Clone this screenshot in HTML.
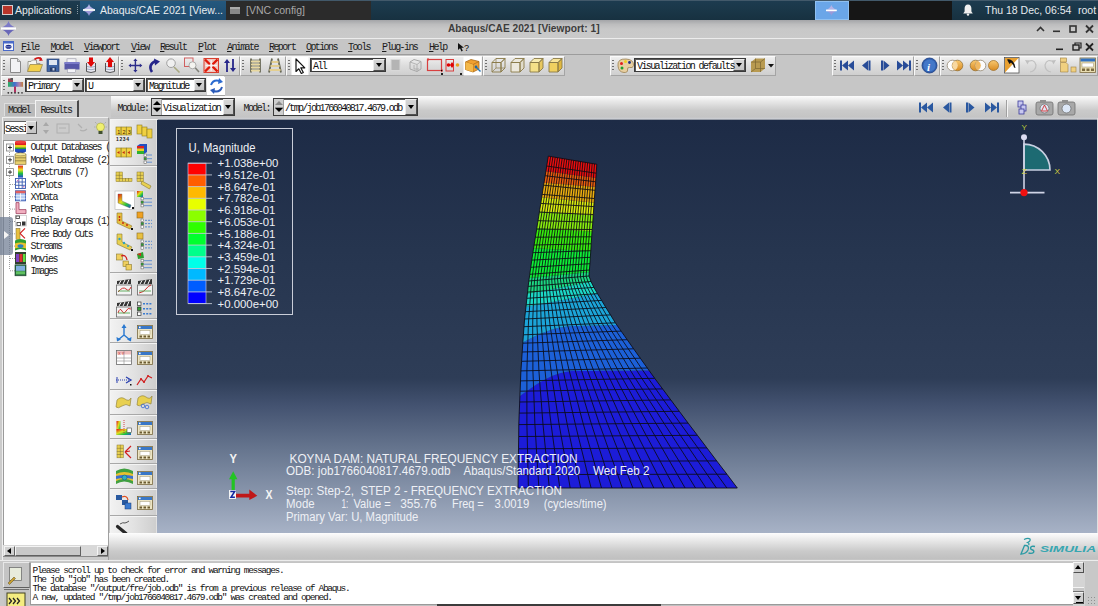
<!DOCTYPE html><html><head><meta charset="utf-8"><style>
*{margin:0;padding:0;box-sizing:border-box}
html,body{width:1098px;height:606px;overflow:hidden;background:#d4d4d4;font-family:'Liberation Sans',sans-serif}
div{position:absolute}
.t{white-space:pre;line-height:12px}
svg{position:absolute;overflow:visible}
.grp{background:linear-gradient(#f0f0f0,#dcdcdc 50%,#cfcfcf);border-top:1px solid #fafafa;border-left:1px solid #fafafa;border-right:1px solid #a4a4a4;border-bottom:1px solid #a4a4a4}
.grip{width:2px;background:repeating-linear-gradient(#707070 0 1px,transparent 1px 3px)}
.combo{background:#fff;border:1px solid #3a3a3a;box-shadow:inset 1px 1px 0 #5a5a5a}
.dbtn{background:linear-gradient(#d6d6d6,#c4c4c4);border-top:1px solid #ececec;border-left:1px solid #ececec;border-right:1px solid #505050;border-bottom:1px solid #505050}
.tri{width:0;height:0;border-left:3.5px solid transparent;border-right:3.5px solid transparent;border-top:4px solid #000}
</style></head><body><div style="left:0;top:0;width:1098px;height:20px;background:linear-gradient(#1d3c50,#173140)"></div><div style="left:0;top:0;width:1098px;height:1px;background:#42596a"></div><div style="left:2px;top:5px;width:11px;height:10px;background:#b8352a;border:1px solid #d8cccc"></div><div class="t" style="left:15px;top:3px;font:10.5px 'Liberation Sans',sans-serif;color:#e4e8ea;line-height:14px">Applications</div><div style="left:77px;top:5px;width:1px;height:10px;background:repeating-linear-gradient(#8a9aa4 0 1px,transparent 1px 2px)"></div><div style="left:80px;top:1px;width:146px;height:19px;background:linear-gradient(#24587e,#1e4b6e)"></div><svg style="left:83px;top:4px" width="12.0" height="12.0" viewBox="0 0 12 12"><path d="M6 0Q6.8 3.2 11.5 5.2H0.5Q5.2 3.2 6 0Z" fill="#b4b2e6"/><path d="M6 12Q6.8 8.8 11.5 6.8H0.5Q5.2 8.8 6 12Z" fill="#9a98d8"/><rect x="0" y="5.1" width="12" height="1.8" fill="#fff"/></svg><div class="t" style="left:100px;top:3px;font:10.5px 'Liberation Sans',sans-serif;color:#e8ecef;line-height:14px">Abaqus/CAE 2021 [View...</div><div style="left:226px;top:1px;width:145px;height:19px;background:#2b2b2b"></div><div style="left:230px;top:7px;width:10px;height:7px;background:#888;border-top:2px solid #aaa"></div><div class="t" style="left:246px;top:3px;font:10.5px 'Liberation Sans',sans-serif;color:#a8a8a8;line-height:14px">[VNC config]</div><div style="left:815px;top:1px;width:34px;height:19px;background:#6aa6e8;border:1px solid #8fc0f0"></div><svg style="left:826px;top:5px" width="10.8" height="10.8" viewBox="0 0 12 12"><path d="M6 0Q6.8 3.2 11.5 5.2H0.5Q5.2 3.2 6 0Z" fill="#b4b2e6"/><path d="M6 12Q6.8 8.8 11.5 6.8H0.5Q5.2 8.8 6 12Z" fill="#9a98d8"/><rect x="0" y="5.1" width="12" height="1.8" fill="#fff"/></svg><div style="left:849px;top:1px;width:103px;height:19px;background:#161616"></div><svg style="left:962px;top:4px" width="12" height="12" viewBox="0 0 12 12"><path d="M6 0.5C3.6 0.5 2.6 2.4 2.6 4.6V7.6L1.2 9.4H10.8L9.4 7.6V4.6C9.4 2.4 8.4 0.5 6 0.5Z" fill="#f0f0f0"/><circle cx="6" cy="10.6" r="1.2" fill="#f0f0f0"/></svg><div class="t" style="left:985px;top:3px;font:10.5px 'Liberation Sans',sans-serif;color:#e8ecef;line-height:14px">Thu 18 Dec, 06:54</div><div class="t" style="left:1078px;top:3px;font:10.5px 'Liberation Sans',sans-serif;color:#e8ecef;line-height:14px">root</div><div style="left:0;top:20px;width:1098px;height:18px;background:linear-gradient(#a4a5a8 0%,#bdbdbe 25%,#c8c8c8 50%,#cacaca 100%)"></div><svg style="left:0.5px;top:20.5px" width="15.0" height="15.0" viewBox="0 0 12 12"><path d="M6 0Q6.8 3.2 11.5 5.2H0.5Q5.2 3.2 6 0Z" fill="#7c7ac8"/><path d="M6 12Q6.8 8.8 11.5 6.8H0.5Q5.2 8.8 6 12Z" fill="#6a68b8"/><rect x="0" y="5.1" width="12" height="1.8" fill="#fff"/></svg><div class="t" style="left:448px;top:22px;font:bold 10.2px 'Liberation Sans',sans-serif;color:#3c3c3c;line-height:13px">Abaqus/CAE 2021 [Viewport: 1]</div><svg style="left:1034px;top:23px" width="64" height="12" viewBox="0 0 64 12"><path d="M3 8L6.5 4.5L10 8" stroke="#333" stroke-width="1.6" fill="none"/><rect x="19" y="7.5" width="7" height="1.6" fill="#333"/><rect x="36" y="3" width="6" height="6" stroke="#333" stroke-width="1.6" fill="none"/><path d="M52 2.5L59 9.5M59 2.5L52 9.5" stroke="#333" stroke-width="1.8"/></svg><div style="left:0;top:38px;width:1098px;height:17px;background:#c6c6c6;border-top:1px solid #ececec;border-bottom:1px solid #9c9c9c"></div><svg style="left:3px;top:41px" width="11" height="10" viewBox="0 0 11 10"><rect x="0.5" y="0.5" width="10" height="9" fill="#f4f6fc" stroke="#4a6ac8" stroke-width="1"/><rect x="0.5" y="0.5" width="10" height="2" fill="#4a6ac8"/><ellipse cx="5.5" cy="5.8" rx="3" ry="2" fill="#1a2a88"/><rect x="3" y="5.3" width="5" height="1" fill="#8090d0"/></svg><div class="t" style="left:21px;top:42px;font:10px 'Liberation Mono',monospace;letter-spacing:-1.6px;color:#1c1c1c;line-height:12px"><u style="text-underline-offset:1px;text-decoration-thickness:1px">F</u>ile</div><div class="t" style="left:50.5px;top:42px;font:10px 'Liberation Mono',monospace;letter-spacing:-1.6px;color:#1c1c1c;line-height:12px"><u style="text-underline-offset:1px;text-decoration-thickness:1px">M</u>odel</div><div class="t" style="left:84px;top:42px;font:10px 'Liberation Mono',monospace;letter-spacing:-1.6px;color:#1c1c1c;line-height:12px"><u style="text-underline-offset:1px;text-decoration-thickness:1px">V</u>iewport</div><div class="t" style="left:131px;top:42px;font:10px 'Liberation Mono',monospace;letter-spacing:-1.6px;color:#1c1c1c;line-height:12px"><u style="text-underline-offset:1px;text-decoration-thickness:1px">V</u>iew</div><div class="t" style="left:160px;top:42px;font:10px 'Liberation Mono',monospace;letter-spacing:-1.6px;color:#1c1c1c;line-height:12px"><u style="text-underline-offset:1px;text-decoration-thickness:1px">R</u>esult</div><div class="t" style="left:198px;top:42px;font:10px 'Liberation Mono',monospace;letter-spacing:-1.6px;color:#1c1c1c;line-height:12px"><u style="text-underline-offset:1px;text-decoration-thickness:1px">P</u>lot</div><div class="t" style="left:227px;top:42px;font:10px 'Liberation Mono',monospace;letter-spacing:-1.6px;color:#1c1c1c;line-height:12px"><u style="text-underline-offset:1px;text-decoration-thickness:1px">A</u>nimate</div><div class="t" style="left:269px;top:42px;font:10px 'Liberation Mono',monospace;letter-spacing:-1.6px;color:#1c1c1c;line-height:12px"><u style="text-underline-offset:1px;text-decoration-thickness:1px">R</u>eport</div><div class="t" style="left:306px;top:42px;font:10px 'Liberation Mono',monospace;letter-spacing:-1.6px;color:#1c1c1c;line-height:12px"><u style="text-underline-offset:1px;text-decoration-thickness:1px">O</u>ptions</div><div class="t" style="left:348px;top:42px;font:10px 'Liberation Mono',monospace;letter-spacing:-1.6px;color:#1c1c1c;line-height:12px"><u style="text-underline-offset:1px;text-decoration-thickness:1px">T</u>ools</div><div class="t" style="left:382px;top:42px;font:10px 'Liberation Mono',monospace;letter-spacing:-1.6px;color:#1c1c1c;line-height:12px"><u style="text-underline-offset:1px;text-decoration-thickness:1px">P</u>lug-ins</div><div class="t" style="left:429px;top:42px;font:10px 'Liberation Mono',monospace;letter-spacing:-1.6px;color:#1c1c1c;line-height:12px"><u style="text-underline-offset:1px;text-decoration-thickness:1px">H</u>elp</div><svg style="left:457px;top:42px" width="14" height="11" viewBox="0 0 14 11"><path d="M1 1L1 8L3 6.3L4.5 9.5L5.8 8.8L4.4 5.8H7Z" fill="#111"/><text x="7" y="8.5" font-family="Liberation Mono" font-size="9" fill="#111">?</text></svg><svg style="left:1054px;top:41px" width="44" height="12" viewBox="0 0 44 12"><rect x="2" y="7.5" width="7" height="1.6" fill="#222"/><rect x="19" y="4" width="6" height="5" stroke="#222" stroke-width="1.4" fill="none"/><path d="M21 4V2H27V7H25" stroke="#222" stroke-width="1.2" fill="none"/><path d="M32 2.5L39 9.5M39 2.5L32 9.5" stroke="#222" stroke-width="1.8"/></svg><div style="left:0;top:55px;width:1098px;height:41px;background:#c6c6c6"></div><div class="grp" style="left:1px;top:56px;width:118px;height:20px"></div><div class="grip" style="left:3px;top:60px;height:12px"></div><div class="grp" style="left:119px;top:56px;width:121px;height:20px"></div><div class="grip" style="left:121px;top:60px;height:12px"></div><div class="grp" style="left:240px;top:56px;width:46px;height:20px"></div><div class="grip" style="left:242px;top:60px;height:12px"></div><div class="grp" style="left:286px;top:56px;width:197px;height:20px"></div><div class="grip" style="left:288px;top:60px;height:12px"></div><div class="grp" style="left:483px;top:56px;width:82px;height:20px"></div><div class="grip" style="left:485px;top:60px;height:12px"></div><div class="grp" style="left:610px;top:56px;width:166px;height:20px"></div><div class="grip" style="left:612px;top:60px;height:12px"></div><div class="grp" style="left:832px;top:56px;width:82px;height:20px"></div><div class="grip" style="left:834px;top:60px;height:12px"></div><div class="grp" style="left:914px;top:56px;width:26px;height:20px"></div><div class="grip" style="left:916px;top:60px;height:12px"></div><div class="grp" style="left:940px;top:56px;width:158px;height:20px"></div><div class="grip" style="left:942px;top:60px;height:12px"></div><div class="grp" style="left:1px;top:76px;width:224px;height:20px"></div><div class="grip" style="left:3px;top:80px;height:12px"></div><div class="combo" style="left:310px;top:58px;width:76px;height:14px"></div><div class="dbtn" style="left:373px;top:59px;width:12px;height:12px"></div><div class="tri" style="left:375.5px;top:63.0px"></div><div class="t" style="left:313px;top:61px;font:10px 'Liberation Mono',monospace;letter-spacing:-1.6px;color:#111;">All</div><div class="combo" style="left:634px;top:58px;width:112px;height:14px"></div><div class="dbtn" style="left:733px;top:59px;width:12px;height:12px"></div><div class="tri" style="left:735.5px;top:63.0px"></div><div class="t" style="left:637px;top:61px;font:10px 'Liberation Mono',monospace;letter-spacing:-1.6px;color:#111;">Visualization defaults</div><div class="combo" style="left:25px;top:78px;width:59px;height:14px"></div><div class="dbtn" style="left:72px;top:79px;width:11px;height:12px"></div><div class="tri" style="left:74.0px;top:83.0px"></div><div class="t" style="left:28px;top:81px;font:10px 'Liberation Mono',monospace;letter-spacing:-1.6px;color:#111;">Primary</div><div class="combo" style="left:85px;top:78px;width:60px;height:14px"></div><div class="dbtn" style="left:133px;top:79px;width:11px;height:12px"></div><div class="tri" style="left:135.0px;top:83.0px"></div><div class="t" style="left:88px;top:81px;font:10px 'Liberation Mono',monospace;letter-spacing:-1.6px;color:#111;">U</div><div class="combo" style="left:146px;top:78px;width:60px;height:14px"></div><div class="dbtn" style="left:194px;top:79px;width:11px;height:12px"></div><div class="tri" style="left:196.0px;top:83.0px"></div><div class="t" style="left:149px;top:81px;font:10px 'Liberation Mono',monospace;letter-spacing:-1.6px;color:#111;">Magnitude</div><div style="left:207px;top:77px;width:18px;height:18px;background:#fff"></div><svg style="left:0;top:0" width="1098" height="100" viewBox="0 0 1098 100"><path d="M10.5 58.5H17.5L20.5 61.5V72.5H10.5Z" fill="#f2f2f4" stroke="#8a8a8a" stroke-width="1"/><path d="M17.5 58.5V61.5H20.5" fill="#d8d8d8" stroke="#8a8a8a" stroke-width="0.8"/><path d="M28 61.5H31L32.5 60H36.5V63.5H40V71.5H28Z" fill="#f4f4ee" stroke="#8a8a80" stroke-width="0.8"/><path d="M27.5 71.5L30 64.5H42.5L40 71.5Z" fill="#f2cf4a" stroke="#9a8a50" stroke-width="0.8"/><path d="M34.5 59.5Q38 56.5 41.5 59" stroke="#d01818" stroke-width="1.8" fill="none"/><path d="M40 57L43 60.5L39.2 61Z" fill="#d01818"/><rect x="47" y="59" width="12" height="12.5" fill="#3f64a4" stroke="#2a4070" stroke-width="0.7"/><rect x="49" y="60" width="8" height="5" fill="#dfe6f0"/><rect x="50" y="67.5" width="6" height="3.5" fill="#283c68"/><rect x="52.5" y="68" width="2" height="2.5" fill="#c8d0e0"/><rect x="67" y="58.8" width="9" height="3.5" fill="#f4f4f8" stroke="#9090a0" stroke-width="0.6"/><path d="M64.5 62.5H79.5V69.5H64.5Z" fill="#5656a8"/><rect x="64.5" y="62" width="15" height="2" fill="#7a7ac8"/><rect x="67.5" y="69" width="8" height="3.5" fill="#f4f4f8" stroke="#9090a0" stroke-width="0.5"/><path d="M86.5 63V71.5Q91 73.5 95.5 71.5V63" fill="#e8e8f0" stroke="#555" stroke-width="1"/><path d="M87 66.5Q91 68 95 66.5M87 69Q91 70.5 95 69" stroke="#8a9ab8" stroke-width="0.8" fill="none"/><path d="M89 57.5H93V62H95L91 67L87 62H89Z" fill="#e00808"/><path d="M105.5 63V71.5Q110 73.5 114.5 71.5V63" fill="#e8e8f0" stroke="#555" stroke-width="1"/><path d="M106 66.5Q110 68 114 66.5M106 69Q110 70.5 114 69" stroke="#8a9ab8" stroke-width="0.8" fill="none"/><path d="M108 67H112V62H114L110 57L106 62H108Z" fill="#e00808"/><path d="M135.4 58.5L137.5 61H136.1V64.8H139.8V63.4L142.3 65.5L139.8 67.6V66.2H136.1V70H137.5L135.4 72.5L133.3 70H134.7V66.2H131V67.6L128.5 65.5L131 63.4V64.8H134.7V61H133.3Z" fill="#2c2c8a"/><path d="M152 72Q147.5 65 155.5 61" stroke="#26268a" stroke-width="2.6" fill="none"/><path d="M154 58.5L160 61.5L155 65.5Z" fill="#26268a"/><line x1="174" y1="67" x2="179.5" y2="72.5" stroke="#a8a880" stroke-width="1.6"/><circle cx="171" cy="63.2" r="4.3" fill="#f0f0f0" stroke="#a0a0a0" stroke-width="1"/><rect x="184.5" y="58" width="8.5" height="8.5" fill="none" stroke="#d06060" stroke-width="1"/><line x1="194" y1="66.5" x2="199" y2="72" stroke="#808078" stroke-width="1.6"/><circle cx="192.5" cy="65.3" r="3.5" fill="#f4f4f0" stroke="#9a9a9a" stroke-width="0.8"/><rect x="204" y="58.5" width="14.5" height="14" fill="#f0c8c0" stroke="#d84030" stroke-width="1"/><path d="M205 59.5L210 64.5M217.5 59.5L212.5 64.5M205 71.5L210 66.5M217.5 71.5L212.5 66.5" stroke="#e01808" stroke-width="2.4"/><path d="M211.2 60V71M205.5 65.5H217" stroke="#f8f0f0" stroke-width="1.4"/><path d="M227 72V62.5" stroke="#26268a" stroke-width="1.8"/><path d="M224 63L227 59L230 63Z" fill="#26268a"/><path d="M233 59V68.5" stroke="#26268a" stroke-width="1.8"/><path d="M230 68L233 72L236 68Z" fill="#26268a"/><path d="M251 58.5V72.5M260 58.5V72.5" stroke="#6a6a58" stroke-width="1.8"/><path d="M251 61.5H260M251 64.5H260M251 67.5H260M251 70.5H260" stroke="#e8d8a0" stroke-width="2"/><path d="M251 60H260M251 63H260M251 66H260M251 69H260" stroke="#6a6a58" stroke-width="0.7"/><path d="M272 58.5L269 72.5M278 58.5L281 72.5" stroke="#6a6a58" stroke-width="1.8"/><path d="M271.5 62H278.5M270.5 66H279.5M269.5 70H280.5" stroke="#e4cf90" stroke-width="2.2"/><rect x="291.5" y="57" width="17" height="18" fill="#fff"/><path d="M296 59V71.5L298.8 68.8L301.3 73.5L303.3 72.5L300.8 67.8H304.8Z" fill="#fff" stroke="#111" stroke-width="1.2" stroke-linejoin="round"/><rect x="391" y="59.5" width="9" height="11" fill="#b4b4b4" stroke="#d8d8d8" stroke-width="1"/><path d="M410 62L414 59.5L421 61.5V69L417 71.5L410 69Z" fill="none" stroke="#a8a8a8" stroke-width="1"/><path d="M410 62L417 64.5L421 61.5M417 64.5V71.5M414 65V69H419" fill="none" stroke="#a8a8a8" stroke-width="0.8"/><rect x="427.5" y="59.5" width="14" height="11" fill="none" stroke="#d84040" stroke-width="1.2"/><path d="M428 58V61M441 69L443 70.5L441 72" stroke="#d84040" stroke-width="1"/><rect x="441" y="73" width="2" height="2" fill="#222"/><rect x="446" y="59.5" width="7.5" height="11.5" fill="none" stroke="#d84040" stroke-width="1"/><circle cx="448.5" cy="65" r="1.8" fill="#e00000"/><path d="M452 62L454 65L452 68L450 65Z" fill="#e00000"/><circle cx="457.5" cy="65" r="1.8" fill="#e8a020"/><rect x="460" y="73" width="2" height="2" fill="#222"/><rect x="463.5" y="56.5" width="18" height="19" fill="#fff"/><path d="M465.5 62L471 59.5L479 61.5V69L473 72L465.5 69.5Z" fill="#f0a030" stroke="#a86818" stroke-width="0.8"/><path d="M465.5 62L473 64.5L479 61.5M473 64.5V72" stroke="#a86818" stroke-width="0.7" fill="none"/><path d="M465.5 62L473 64.5V72L465.5 69.5Z" fill="#f4b848"/><line x1="476" y1="67" x2="480.5" y2="71.5" stroke="#2878b8" stroke-width="1.4"/><circle cx="476" cy="67" r="1.4" fill="#2068a0"/><path d="M492 62.5H501V72H492ZM492 62.5L496 58.5H505L501 62.5ZM501 62.5L505 58.5V68L501 72Z" fill="none" stroke="#8a7a48" stroke-width="0.9"/><path d="M496 58.5V68H505M496 68L492 72" fill="none" stroke="#8a7a48" stroke-width="0.7"/><path d="M511 62.5H520V72H511Z" fill="#ece8dc"/><path d="M511 62.5L515 58.5H524L520 62.5Z" fill="#ece8dc"/><path d="M520 62.5L524 58.5V68L520 72Z" fill="#e0dccc"/><path d="M511 62.5H520V72H511ZM511 62.5L515 58.5H524L520 62.5ZM520 62.5L524 58.5V68L520 72Z" fill="none" stroke="#8a7a48" stroke-width="0.9"/><path d="M530 62.5H539V72H530Z" fill="#f4e088"/><path d="M530 62.5L534 58.5H543L539 62.5Z" fill="#f8ecb0"/><path d="M539 62.5L543 58.5V68L539 72Z" fill="#e8c860"/><path d="M530 62.5H539V72H530ZM530 62.5L534 58.5H543L539 62.5ZM539 62.5L543 58.5V68L539 72Z" fill="none" stroke="#8a7a48" stroke-width="0.9"/><path d="M549 62.5H558V72H549Z" fill="#f0d060"/><path d="M549 62.5L553 58.5H562L558 62.5Z" fill="#f8e498"/><path d="M558 62.5L562 58.5V68L558 72Z" fill="#e0b840"/><path d="M549 62.5H558V72H549ZM549 62.5L553 58.5H562L558 62.5ZM558 62.5L562 58.5V68L558 72Z" fill="none" stroke="#8a7a48" stroke-width="0.9"/><path d="M618 66Q617 58.5 626 59Q634 59.5 633.5 65.5Q633 68.5 629.5 67.5Q627 67 627.5 70Q628 72.5 624 72.5Q618.5 72 618 66Z" fill="#e8cfa0" stroke="#9a8050" stroke-width="0.8"/><circle cx="621.5" cy="63.5" r="1.5" fill="#e02020"/><circle cx="625.5" cy="61.5" r="1.5" fill="#f0d020"/><circle cx="629.5" cy="62.5" r="1.4" fill="#203080"/><circle cx="622" cy="68" r="1.5" fill="#20a030"/><path d="M751 62L755.5 58.5H765V68.5L760.5 72H751Z" fill="#b89a50"/><path d="M751 62H760.5V72M760.5 62L765 58.5M755.5 58.5V68.5H765M755.5 68.5L751 72" fill="none" stroke="#7a6530" stroke-width="0.7"/><path d="M768 64H774L771 67.5Z" fill="#111"/><rect x="840" y="60.5" width="2" height="10" fill="#284c98"/><path d="M842 65.5L848 60.5V70.5Z M848 65.5L854 60.5V70.5Z" fill="#284c98"/><path d="M862 65.5L868 60.5V70.5Z" fill="#284c98"/><rect x="868.5" y="60.5" width="2" height="10" fill="#284c98"/><rect x="881" y="60.5" width="2" height="10" fill="#284c98"/><path d="M883.5 60.5L889.5 65.5L883.5 70.5Z" fill="#284c98"/><path d="M897 60.5L903 65.5L897 70.5Z M903 60.5L909 65.5L903 70.5Z" fill="#284c98"/><rect x="909" y="60.5" width="2" height="10" fill="#284c98"/><circle cx="929.5" cy="65.5" r="7.5" fill="#3060b0" stroke="#1c3c80" stroke-width="0.8"/><circle cx="929.5" cy="65.5" r="6" fill="#4478c8"/><text x="927" y="70.5" font-family="Liberation Serif" font-style="italic" font-weight="bold" font-size="11" fill="#fff">i</text><defs><linearGradient id="og" x1="0" y1="0" x2="0" y2="1"><stop offset="0" stop-color="#f8c870"/><stop offset="1" stop-color="#d88a20"/></linearGradient></defs><circle cx="952.5" cy="65.5" r="5.3" fill="#fff" stroke="#8a7a60" stroke-width="0.7"/><circle cx="957.5" cy="65.5" r="5.3" fill="url(#og)" stroke="#8a6a30" stroke-width="0.7"/><path d="M955 60.8A5.3 5.3 0 0 0 955 70.2A5.3 5.3 0 0 0 955 60.8Z" fill="#f8d8a0"/><circle cx="975.5" cy="65.5" r="5.3" fill="url(#og)" stroke="#8a6a30" stroke-width="0.7"/><circle cx="980.5" cy="65.5" r="5.3" fill="#fff" fill-opacity="0.9" stroke="#8a7a60" stroke-width="0.7"/><path d="M978 60.8A5.3 5.3 0 0 1 978 70.2A5.3 5.3 0 0 1 978 60.8Z" fill="#f0b860"/><circle cx="993.5" cy="65.5" r="5" fill="url(#og)" stroke="#9a6820" stroke-width="0.7"/><rect x="1004.5" y="57.5" width="14.5" height="15.5" fill="#fff" stroke="#555" stroke-width="0.8"/><path d="M1005 58H1018.5L1005 72.5Z" fill="#e8a030"/><path d="M1007 59.5Q1010 58.5 1012.5 61Q1015 63.5 1015.5 68L1014 67.5Q1013 64 1011 62.5L1009.5 64Z" fill="#111"/><path d="M1027 62Q1034 58 1036 65Q1036 71 1030 72" stroke="#c0c0c0" stroke-width="1.2" fill="none"/><path d="M1025 60L1027.5 64.5L1029.5 60.5Z" fill="#c0c0c0"/><path d="M1054 62Q1047 58 1045 65Q1045 71 1051 72" stroke="#c0c0c0" stroke-width="1.2" fill="none"/><path d="M1056 60L1053.5 64.5L1051.5 60.5Z" fill="#c0c0c0"/><rect x="1060.5" y="58" width="6" height="4" fill="#f0d080" stroke="#a08040" stroke-width="0.6"/><path d="M1060.5 62.5H1066L1068 64.5V72H1060.5Z" fill="#f0d080" stroke="#a08040" stroke-width="0.6"/><rect x="1071" y="67" width="5" height="5" fill="#f0d080" stroke="#a08040" stroke-width="0.6"/><rect x="1080" y="58" width="15.5" height="14.5" fill="#e8dcb0" stroke="#7a6a40" stroke-width="0.8"/><rect x="1080.5" y="58.5" width="14.5" height="3" fill="#3070c0"/><rect x="1082" y="63" width="11.5" height="4" fill="#fff" stroke="#9a9070" stroke-width="0.5"/><rect x="1082" y="68.5" width="3" height="2.5" fill="#7a6a40"/><rect x="1086.5" y="68.5" width="3" height="2.5" fill="#7a6a40"/><rect x="1091" y="68.5" width="3" height="2.5" fill="#7a6a40"/><path d="M211 85Q213 79 220 81" stroke="#2a6ad0" stroke-width="2" fill="none"/><path d="M219 78L223 82L218 84Z" fill="#2a6ad0"/><path d="M222 87Q220 93 213 91" stroke="#2a5ab8" stroke-width="2" fill="none"/><path d="M214 94L210 90L215 88Z" fill="#2a5ab8"/><defs><linearGradient id="pv" x1="0" x2="1"><stop offset="0" stop-color="#30b060"/><stop offset="0.45" stop-color="#4070d0"/><stop offset="0.75" stop-color="#b080b0"/><stop offset="1" stop-color="#c08040"/></linearGradient></defs><rect x="8" y="82" width="15" height="4.8" fill="url(#pv)"/><rect x="8" y="78.5" width="5" height="3.5" fill="#a04050"/><rect x="10.5" y="78" width="2.5" height="2" fill="#555"/><rect x="14" y="86.5" width="2" height="6" fill="#b03060"/><circle cx="8.3" cy="92.8" r="0.9" fill="#333"/><circle cx="11.6" cy="92.8" r="0.9" fill="#333"/><circle cx="15" cy="92.8" r="0.9" fill="#333"/><circle cx="18.5" cy="92.8" r="0.9" fill="#333"/><circle cx="22" cy="92.8" r="0.9" fill="#444"/></svg><div style="left:111px;top:96px;width:987px;height:24px;background:linear-gradient(#fcfcfc 0%,#e8e8e8 22%,#cacaca 60%,#c4c4c4 88%,#cdd0d6 96%,#5a6270 100%)"></div><div class="t" style="left:117.5px;top:103px;font:10px 'Liberation Mono',monospace;letter-spacing:-1.6px;color:#1c1c1c;">Module:</div><div class="t" style="left:243.5px;top:103px;font:10px 'Liberation Mono',monospace;letter-spacing:-1.6px;color:#1c1c1c;">Model:</div><div class="combo" style="left:151px;top:98px;width:84px;height:18px"></div><div class="dbtn" style="left:223px;top:99px;width:11px;height:16px"></div><div class="tri" style="left:225.0px;top:105.0px"></div><div style="left:152px;top:99px;width:10px;height:16px;background:#cfcfcf;border-right:1px solid #a0a0a0"></div><div style="left:153px;top:101px;width:0;height:0;border-left:4px solid transparent;border-right:4px solid transparent;border-bottom:4px solid #000"></div><div style="left:153px;top:108px;width:0;height:0;border-left:4px solid transparent;border-right:4px solid transparent;border-top:4px solid #000"></div><div style="left:153px;top:106.5px;width:8px;height:1px;background:#909090"></div><div class="t" style="left:163px;top:103px;font:10px 'Liberation Mono',monospace;letter-spacing:-1.6px;color:#111;">Visualization</div><div class="combo" style="left:273px;top:98px;width:145px;height:18px"></div><div class="dbtn" style="left:405px;top:99px;width:12px;height:16px"></div><div class="tri" style="left:407.5px;top:105.0px"></div><div style="left:274px;top:99px;width:10px;height:16px;background:#cfcfcf;border-right:1px solid #a0a0a0"></div><div style="left:275px;top:101px;width:0;height:0;border-left:4px solid transparent;border-right:4px solid transparent;border-bottom:4px solid #8a8a8a"></div><div style="left:275px;top:108px;width:0;height:0;border-left:4px solid transparent;border-right:4px solid transparent;border-top:4px solid #000"></div><div style="left:275px;top:106.5px;width:8px;height:1px;background:#909090"></div><div class="t" style="left:285px;top:103px;font:10px 'Liberation Mono',monospace;letter-spacing:-1.68px;color:#111;">/tmp/job1766040817.4679.odb</div><svg style="left:0;top:96px" width="1098" height="24" viewBox="0 96 1098 24"><rect x="919" y="102.5" width="2" height="10" fill="#2a58a0"/><path d="M921 107.5L927 102.5V112.5Z M927 107.5L933 102.5V112.5Z" fill="#2a58a0"/><path d="M943 107.5L949 102.5V112.5Z" fill="#2a58a0"/><rect x="949.5" y="102.5" width="2" height="10" fill="#2a58a0"/><rect x="966" y="102.5" width="2" height="10" fill="#2a58a0"/><path d="M968.5 102.5L974.5 107.5L968.5 112.5Z" fill="#2a58a0"/><path d="M985 102.5L991 107.5L985 112.5Z M991 102.5L997 107.5L991 112.5Z" fill="#2a58a0"/><rect x="997" y="102.5" width="2" height="10" fill="#2a58a0"/><line x1="1006.5" y1="100" x2="1006.5" y2="117" stroke="#a0a0a0"/><line x1="1007.5" y1="100" x2="1007.5" y2="117" stroke="#f4f4f4"/><rect x="1018" y="101" width="5" height="6" fill="#c8c8f0" stroke="#3a3a9a" stroke-width="0.8"/><rect x="1021" y="105" width="5" height="6" fill="#c8c8f0" stroke="#3a3a9a" stroke-width="0.8"/><rect x="1019" y="109" width="5" height="5" fill="#c8c8f0" stroke="#3a3a9a" stroke-width="0.8"/><rect x="1036" y="102" width="17" height="13" rx="2" fill="#a8a8a8" stroke="#707070" stroke-width="0.8"/><rect x="1040" y="100" width="6" height="3" fill="#909090"/><circle cx="1044.5" cy="108.5" r="4.5" fill="#dde6f4" stroke="#707070" stroke-width="0.8"/><path d="M1044.5 105L1047.5 111H1041.5Z" fill="none" stroke="#d03030" stroke-width="0.9"/><rect x="1058" y="102" width="17" height="13" rx="2" fill="#a8a8a8" stroke="#707070" stroke-width="0.8"/><rect x="1062" y="100" width="6" height="3" fill="#909090"/><circle cx="1066.5" cy="108.5" r="4.5" fill="#dde8f8" stroke="#707070" stroke-width="0.8"/></svg><div style="left:0;top:96px;width:111px;height:465px;background:#cbcbcb"></div><div style="left:4px;top:103px;width:31px;height:13px;background:#bababa;border-top:1px solid #dedede;border-left:1px solid #dedede"></div><div style="left:35px;top:100px;width:44px;height:18px;background:#cfcfcf;border-top:1px solid #f4f4f4;border-left:1px solid #f4f4f4;border-right:2px solid #4a4a4a"></div><div class="t" style="left:8px;top:105px;font:10px 'Liberation Mono',monospace;letter-spacing:-1.6px;color:#1c1c1c;">Model</div><div class="t" style="left:40.5px;top:104.5px;font:10px 'Liberation Mono',monospace;letter-spacing:-1.6px;color:#1c1c1c;">Results</div><div style="left:2px;top:117px;width:107px;height:443px;border-top:1px solid #efefef;border-left:1px solid #efefef;border-right:1px solid #a0a0a0"></div><div style="left:4px;top:121px;width:33px;height:13px;background:#fff;border-top:1px solid #606060;border-left:1px solid #606060"></div><div class="t" style="left:5px;top:124px;font:10px 'Liberation Mono',monospace;letter-spacing:-1.6px;color:#111;">Sessi</div><div class="dbtn" style="left:26px;top:121px;width:11px;height:13px"></div><div class="tri" style="left:28px;top:126px"></div><svg style="left:0;top:118px" width="111" height="22" viewBox="0 118 111 22"><path d="M43 126L46 122L49 126Z M43 130L46 134L49 130Z" fill="#a8a8a8"/><rect x="57" y="124" width="12" height="9" fill="none" stroke="#b0b0b0" stroke-width="1"/><path d="M59 128H66" stroke="#b0b0b0"/><path d="M78 124L82 128M80 130Q84 132 87 129" stroke="#b0b0b0" stroke-width="1.2" fill="none"/><circle cx="100.5" cy="127" r="4" fill="#f0f070" stroke="#a0a040" stroke-width="0.6"/><rect x="98.5" y="131" width="4" height="3" fill="#405030"/><path d="M95 122L96.5 123.5M106 122L104.5 123.5M94 127H95.5M107 127H105.5" stroke="#a0a0a0" stroke-width="0.7"/></svg><div style="left:3px;top:140px;width:105px;height:406px;background:#fff;border-top:1px solid #9a9a9a;border-left:1px solid #9a9a9a"></div><div class="t" style="left:30.5px;top:142px;font:10px 'Liberation Mono',monospace;letter-spacing:-1.6px;color:#1c1c1c;">Output Databases (</div><div class="t" style="left:30.5px;top:155px;font:10px 'Liberation Mono',monospace;letter-spacing:-1.6px;color:#1c1c1c;">Model Database (2)</div><div class="t" style="left:30.5px;top:167px;font:10px 'Liberation Mono',monospace;letter-spacing:-1.6px;color:#1c1c1c;">Spectrums (7)</div><div class="t" style="left:30.5px;top:180px;font:10px 'Liberation Mono',monospace;letter-spacing:-1.6px;color:#1c1c1c;">XYPlots</div><div class="t" style="left:30.5px;top:192px;font:10px 'Liberation Mono',monospace;letter-spacing:-1.6px;color:#1c1c1c;">XYData</div><div class="t" style="left:30.5px;top:204px;font:10px 'Liberation Mono',monospace;letter-spacing:-1.6px;color:#1c1c1c;">Paths</div><div class="t" style="left:30.5px;top:216px;font:10px 'Liberation Mono',monospace;letter-spacing:-1.6px;color:#1c1c1c;">Display Groups (1)</div><div class="t" style="left:30.5px;top:229px;font:10px 'Liberation Mono',monospace;letter-spacing:-1.6px;color:#1c1c1c;">Free Body Cuts</div><div class="t" style="left:30.5px;top:241px;font:10px 'Liberation Mono',monospace;letter-spacing:-1.6px;color:#1c1c1c;">Streams</div><div class="t" style="left:30.5px;top:254px;font:10px 'Liberation Mono',monospace;letter-spacing:-1.6px;color:#1c1c1c;">Movies</div><div class="t" style="left:30.5px;top:266px;font:10px 'Liberation Mono',monospace;letter-spacing:-1.6px;color:#1c1c1c;">Images</div><svg style="left:0;top:0" width="111" height="300" viewBox="0 0 111 300"><line x1="9.5" y1="150" x2="9.5" y2="270" stroke="#a0a0a0" stroke-width="1" stroke-dasharray="1 1"/><line x1="10" y1="184.5" x2="15" y2="184.5" stroke="#a0a0a0" stroke-width="1" stroke-dasharray="1 1"/><line x1="10" y1="196.8" x2="15" y2="196.8" stroke="#a0a0a0" stroke-width="1" stroke-dasharray="1 1"/><line x1="10" y1="209.1" x2="15" y2="209.1" stroke="#a0a0a0" stroke-width="1" stroke-dasharray="1 1"/><line x1="10" y1="221.5" x2="15" y2="221.5" stroke="#a0a0a0" stroke-width="1" stroke-dasharray="1 1"/><line x1="10" y1="233.8" x2="15" y2="233.8" stroke="#a0a0a0" stroke-width="1" stroke-dasharray="1 1"/><line x1="10" y1="246.1" x2="15" y2="246.1" stroke="#a0a0a0" stroke-width="1" stroke-dasharray="1 1"/><line x1="10" y1="258.5" x2="15" y2="258.5" stroke="#a0a0a0" stroke-width="1" stroke-dasharray="1 1"/><line x1="10" y1="270.8" x2="15" y2="270.8" stroke="#a0a0a0" stroke-width="1" stroke-dasharray="1 1"/><rect x="6.5" y="144" width="7" height="7" fill="#fff" stroke="#808080" stroke-width="0.8"/><path d="M8 147.5H12M10 145.5V149.5" stroke="#222" stroke-width="0.9"/><rect x="6.5" y="156.3" width="7" height="7" fill="#fff" stroke="#808080" stroke-width="0.8"/><path d="M8 159.8H12M10 157.8V161.8" stroke="#222" stroke-width="0.9"/><rect x="6.5" y="168.6" width="7" height="7" fill="#fff" stroke="#808080" stroke-width="0.8"/><path d="M8 172.1H12M10 170.1V174.1" stroke="#222" stroke-width="0.9"/><ellipse cx="20.5" cy="151" rx="5.5" ry="2" fill="#2040b0"/><rect x="15" y="142" width="11" height="9" fill="#30a030"/><rect x="15" y="142" width="11" height="3" fill="#e02020"/><rect x="15" y="145" width="11" height="2.5" fill="#f0d020"/><rect x="15" y="149" width="11" height="2.5" fill="#2050c0"/><ellipse cx="20.5" cy="142" rx="5.5" ry="1.5" fill="#f04040"/><rect x="15" y="154.3" width="11" height="10" fill="#e8d070" stroke="#7a6a30" stroke-width="0.6"/><path d="M15 157.8H26M15 160.8H26" stroke="#7a6a30" stroke-width="0.7"/><ellipse cx="20.5" cy="154.3" rx="5.5" ry="1.5" fill="#f4e8a0" stroke="#7a6a30" stroke-width="0.5"/><defs><linearGradient id="spec" x1="0" y1="0" x2="0" y2="1"><stop offset="0" stop-color="#e02020"/><stop offset="0.35" stop-color="#f0e020"/><stop offset="0.65" stop-color="#20c040"/><stop offset="1" stop-color="#2040e0"/></linearGradient></defs><rect x="18" y="165.6" width="5" height="12" fill="url(#spec)"/><rect x="15.5" y="178.5" width="10" height="10" fill="#fff" stroke="#3a5ab0" stroke-width="0.9"/><path d="M15.5 182H25.5M15.5 185.3H25.5M18.8 178.5V188.5M22.2 178.5V188.5" stroke="#3a5ab0" stroke-width="0.9"/><rect x="17" y="180" width="1.5" height="1.5" fill="#d080c0"/><rect x="23" y="186" width="1.5" height="1.5" fill="#d080c0"/><rect x="15.5" y="190.8" width="10" height="10" fill="#a8c4f0" stroke="#3a5ab0" stroke-width="0.9"/><rect x="15.5" y="190.8" width="10" height="2.5" fill="#e06060"/><path d="M15.5 195.8H25.5M15.5 198.3H25.5M20.5 193.3V200.8" stroke="#fff" stroke-width="0.8"/><path d="M16 202.6H19V209.6H26V213.6H16Z" fill="#f0b0c0" stroke="#a04060" stroke-width="0.8"/><rect x="15.5" y="215.5" width="11" height="10.5" fill="#fff" stroke="#bbb" stroke-width="0.6"/><rect x="16" y="216" width="3.5" height="2.5" fill="#fff" stroke="#333" stroke-width="0.8"/><rect x="17" y="222.5" width="3.5" height="3" fill="#fff" stroke="#333" stroke-width="0.8"/><rect x="22" y="221.5" width="3.5" height="4" fill="#333"/><rect x="16" y="228.3" width="4" height="11" fill="#e8c040" stroke="#7a6a30" stroke-width="0.5"/><path d="M20 233.3L25 228.3M20 233.3L25 238.3" stroke="#d02020" stroke-width="1.2"/><path d="M15 240.6Q20.5 237.6 26 240.6V250.6Q20.5 247.6 15 250.6Z" fill="#30a030"/><path d="M15 243.6Q20.5 241.6 26 243.6V248.6Q20.5 246.6 15 248.6Z" fill="#e8c030"/><ellipse cx="20.5" cy="246.1" rx="3" ry="1.8" fill="#2a80c0"/><rect x="15" y="252" width="11" height="12" fill="#304030"/><rect x="16" y="254" width="3" height="8" fill="#8040c0"/><rect x="19.5" y="254" width="3" height="8" fill="#e03030"/><rect x="23" y="254" width="2.5" height="8" fill="#60e040"/><rect x="15" y="264.8" width="11" height="11" fill="#2a7040" stroke="#1a3a2a" stroke-width="0.6"/><rect x="16" y="265.8" width="9" height="5" fill="#80b0e0"/><rect x="16" y="271.3" width="9" height="3" fill="#60c060"/></svg><div style="left:0;top:217px;width:13px;height:38px;background:rgba(110,124,145,0.72);border-radius:0 3px 3px 0"></div><div style="left:4px;top:231px;width:0;height:0;border-top:4px solid transparent;border-bottom:4px solid transparent;border-left:5px solid #f4f4f4"></div><div style="left:3px;top:545px;width:105px;height:12px;background:#d8d8d8;border-bottom:1px solid #8a8a8a"></div><div style="left:4px;top:546px;width:11px;height:10px;background:#d0d0d0;border-right:1px solid #606060;border-bottom:1px solid #606060;border-top:1px solid #f4f4f4;border-left:1px solid #f4f4f4"></div><div style="left:7px;top:548px;width:0;height:0;border-top:3px solid transparent;border-bottom:3px solid transparent;border-right:4px solid #000"></div><div style="left:15px;top:546px;width:66px;height:10px;background:#c8c8c8;border-right:1px solid #606060;border-bottom:1px solid #606060;border-top:1px solid #f4f4f4;border-left:1px solid #f4f4f4"></div><div style="left:97px;top:546px;width:11px;height:10px;background:#d0d0d0;border-right:1px solid #606060;border-bottom:1px solid #606060;border-top:1px solid #f4f4f4;border-left:1px solid #f4f4f4"></div><div style="left:101px;top:548px;width:0;height:0;border-top:3px solid transparent;border-bottom:3px solid transparent;border-left:4px solid #000"></div><div style="left:109px;top:118px;width:49px;height:420px;background:#c4c4c4"></div><svg style="left:0;top:0" width="160" height="540" viewBox="0 0 160 540"><rect x="110.5" y="119.5" width="46.5" height="46" fill="url(#tbg)" stroke="#f4f4f4" stroke-width="1"/><line x1="110" y1="165.5" x2="157.5" y2="165.5" stroke="#a8a8a8" stroke-width="1"/><rect x="110.5" y="166.5" width="46.5" height="106" fill="url(#tbg)" stroke="#f4f4f4" stroke-width="1"/><line x1="110" y1="272.5" x2="157.5" y2="272.5" stroke="#a8a8a8" stroke-width="1"/><rect x="110.5" y="273.5" width="46.5" height="45" fill="url(#tbg)" stroke="#f4f4f4" stroke-width="1"/><line x1="110" y1="318.5" x2="157.5" y2="318.5" stroke="#a8a8a8" stroke-width="1"/><rect x="110.5" y="319.5" width="46.5" height="23" fill="url(#tbg)" stroke="#f4f4f4" stroke-width="1"/><line x1="110" y1="342.5" x2="157.5" y2="342.5" stroke="#a8a8a8" stroke-width="1"/><rect x="110.5" y="343.5" width="46.5" height="46" fill="url(#tbg)" stroke="#f4f4f4" stroke-width="1"/><line x1="110" y1="389.5" x2="157.5" y2="389.5" stroke="#a8a8a8" stroke-width="1"/><rect x="110.5" y="390.5" width="46.5" height="24" fill="url(#tbg)" stroke="#f4f4f4" stroke-width="1"/><line x1="110" y1="414.5" x2="157.5" y2="414.5" stroke="#a8a8a8" stroke-width="1"/><rect x="110.5" y="415.5" width="46.5" height="23" fill="url(#tbg)" stroke="#f4f4f4" stroke-width="1"/><line x1="110" y1="438.5" x2="157.5" y2="438.5" stroke="#a8a8a8" stroke-width="1"/><rect x="110.5" y="439.5" width="46.5" height="24" fill="url(#tbg)" stroke="#f4f4f4" stroke-width="1"/><line x1="110" y1="463.5" x2="157.5" y2="463.5" stroke="#a8a8a8" stroke-width="1"/><rect x="110.5" y="464.5" width="46.5" height="24" fill="url(#tbg)" stroke="#f4f4f4" stroke-width="1"/><line x1="110" y1="488.5" x2="157.5" y2="488.5" stroke="#a8a8a8" stroke-width="1"/><rect x="110.5" y="489.5" width="46.5" height="26" fill="url(#tbg)" stroke="#f4f4f4" stroke-width="1"/><line x1="110" y1="515.5" x2="157.5" y2="515.5" stroke="#a8a8a8" stroke-width="1"/><rect x="110.5" y="516.5" width="46.5" height="21" fill="url(#tbg)" stroke="#f4f4f4" stroke-width="1"/><line x1="110" y1="537.5" x2="157.5" y2="537.5" stroke="#a8a8a8" stroke-width="1"/><rect x="116.0" y="127" width="5" height="8" fill="#f0d040" stroke="#8a7a20" stroke-width="0.6"/><text x="117.3" y="133.5" font-size="5.5" font-family="Liberation Sans" fill="#402000">1</text><rect x="121.2" y="127" width="5" height="8" fill="#f0d040" stroke="#8a7a20" stroke-width="0.6"/><text x="122.5" y="133.5" font-size="5.5" font-family="Liberation Sans" fill="#402000">2</text><rect x="126.4" y="127" width="5" height="8" fill="#f0d040" stroke="#8a7a20" stroke-width="0.6"/><text x="127.7" y="133.5" font-size="5.5" font-family="Liberation Sans" fill="#402000">3</text><text x="116" y="141" font-size="5" font-family="Liberation Sans" font-weight="bold" fill="#222" letter-spacing="0.6">1234</text><rect x="137" y="125" width="5" height="9" fill="#f0d040" stroke="#8a7a20" stroke-width="0.6"/><rect x="142" y="127" width="5" height="9" fill="#f0d040" stroke="#8a7a20" stroke-width="0.6"/><rect x="147" y="129" width="5" height="9" fill="#f0d040" stroke="#8a7a20" stroke-width="0.6"/><rect x="116.0" y="148" width="5" height="9" fill="#f0d040" stroke="#8a7a20" stroke-width="0.6"/><path d="M117.0 152.5L119.5 151V154Z" fill="#c03010"/><rect x="121.2" y="148" width="5" height="9" fill="#f0d040" stroke="#8a7a20" stroke-width="0.6"/><path d="M122.2 152.5L124.7 151V154Z" fill="#c03010"/><rect x="126.4" y="148" width="5" height="9" fill="#f0d040" stroke="#8a7a20" stroke-width="0.6"/><path d="M127.4 152.5L129.9 151V154Z" fill="#c03010"/><path d="M137 146L140 144H147V152L144 154H137Z" fill="#2050c0"/><rect x="137" y="146" width="7" height="2.5" fill="#e02020"/><rect x="137" y="148.5" width="7" height="2.5" fill="#f0d020"/><rect x="137" y="151" width="7" height="3" fill="#30b030"/><rect x="144" y="154" width="2.4" height="2.4" fill="#fff" stroke="#555" stroke-width="0.5"/><rect x="144" y="157.5" width="2.4" height="2.4" fill="#30a030" stroke="#555" stroke-width="0.5"/><rect x="144" y="161" width="2.4" height="2.4" fill="#fff" stroke="#555" stroke-width="0.5"/><path d="M147 155H152M147 158.7H152M147 162.2H152" stroke="#5a8ad0" stroke-width="0.9"/><rect x="116.0" y="172.0" width="3.2" height="3.2" fill="#e8d050" stroke="#8a7a30" stroke-width="0.5"/><rect x="116.0" y="175.2" width="3.2" height="3.2" fill="#e8d050" stroke="#8a7a30" stroke-width="0.5"/><rect x="116.0" y="178.4" width="3.2" height="3.2" fill="#e8d050" stroke="#8a7a30" stroke-width="0.5"/><rect x="119.2" y="172.0" width="3.2" height="3.2" fill="#e8d050" stroke="#8a7a30" stroke-width="0.5"/><rect x="119.2" y="175.2" width="3.2" height="3.2" fill="#e8d050" stroke="#8a7a30" stroke-width="0.5"/><rect x="119.2" y="178.4" width="3.2" height="3.2" fill="#e8d050" stroke="#8a7a30" stroke-width="0.5"/><rect x="122.4" y="178.4" width="3.2" height="3.2" fill="#e8d050" stroke="#8a7a30" stroke-width="0.5"/><rect x="125.6" y="178.4" width="3.2" height="3.2" fill="#e8d050" stroke="#8a7a30" stroke-width="0.5"/><rect x="128.8" y="178.4" width="3.2" height="3.2" fill="#e8d050" stroke="#8a7a30" stroke-width="0.5"/><rect x="137.0" y="172.0" width="3.2" height="3.2" fill="#e8d050" stroke="#8a7a30" stroke-width="0.5"/><rect x="137.0" y="175.2" width="3.2" height="3.2" fill="#e8d050" stroke="#8a7a30" stroke-width="0.5"/><rect x="140.2" y="172.0" width="3.2" height="3.2" fill="#e8d050" stroke="#8a7a30" stroke-width="0.5"/><rect x="140.2" y="175.2" width="3.2" height="3.2" fill="#e8d050" stroke="#8a7a30" stroke-width="0.5"/><rect x="137.0" y="178.4" width="3.2" height="3.2" fill="#e8d050" stroke="#8a7a30" stroke-width="0.5"/><rect x="140.2" y="178.4" width="3.2" height="3.2" fill="#e8d050" stroke="#8a7a30" stroke-width="0.5"/><path d="M142 181L151 186L149.5 189L141 184Z" fill="#e8d050" stroke="#8a7a30" stroke-width="0.6"/><rect x="115" y="191" width="19.5" height="18.5" fill="#fff" stroke="#b0b0b0" stroke-width="0.6"/><defs><linearGradient id="rb" x1="0" y1="0" x2="1" y2="1"><stop offset="0" stop-color="#e01010"/><stop offset="0.4" stop-color="#e0e020"/><stop offset="0.7" stop-color="#20c040"/><stop offset="1" stop-color="#2050e0"/></linearGradient><linearGradient id="tbg" x1="0" y1="0" x2="1" y2="0"><stop offset="0" stop-color="#f2f2f2"/><stop offset="0.5" stop-color="#e2e2e2"/><stop offset="1" stop-color="#cdcdcd"/></linearGradient></defs><path d="M118 194H122V201L131 205L130 208L118 203Z" fill="url(#rb)" stroke="#606060" stroke-width="0.4"/><rect x="132" y="207" width="2" height="2" fill="#111"/><path d="M137 191H143V197H137Z" fill="url(#rb)"/><rect x="141" y="197.5" width="2.4" height="2.4" fill="#fff" stroke="#555" stroke-width="0.5"/><rect x="141" y="201" width="2.4" height="2.4" fill="#30a030" stroke="#555" stroke-width="0.5"/><rect x="141" y="204.5" width="2.4" height="2.4" fill="#fff" stroke="#555" stroke-width="0.5"/><path d="M144 198.7H152M144 202.2H152M144 205.7H152" stroke="#5a8ad0" stroke-width="0.9"/><path d="M117 213H122V221L132 226L130 229L117 223Z" fill="#e8c040" stroke="#8a7a30" stroke-width="0.6"/><circle cx="119.5" cy="217" r="0.9" fill="#c02010"/><circle cx="119.5" cy="220" r="0.9" fill="#c02010"/><circle cx="123" cy="223" r="0.9" fill="#c02010"/><circle cx="127" cy="225" r="0.9" fill="#c02010"/><rect x="131" y="228" width="2" height="2" fill="#111"/><rect x="137" y="212" width="6" height="6" fill="#f0a020" stroke="#8a6a20" stroke-width="0.6"/><rect x="141" y="219.0" width="2.6" height="2.6" fill="#fff" stroke="#555" stroke-width="0.5"/><line x1="145" y1="220.3" x2="152" y2="220.3" stroke="#5a8ad0" stroke-width="1" stroke-dasharray="2 1"/><rect x="141" y="222.3" width="2.6" height="2.6" fill="#30a030" stroke="#555" stroke-width="0.5"/><line x1="145" y1="223.60000000000002" x2="152" y2="223.60000000000002" stroke="#5a8ad0" stroke-width="1" stroke-dasharray="2 1"/><rect x="141" y="225.6" width="2.6" height="2.6" fill="#fff" stroke="#555" stroke-width="0.5"/><line x1="145" y1="226.9" x2="152" y2="226.9" stroke="#5a8ad0" stroke-width="1" stroke-dasharray="2 1"/><path d="M117 234H122V242L132 247L130 250L117 244Z" fill="#e8d050" stroke="#8a7a30" stroke-width="0.6"/><circle cx="119.5" cy="239" r="1.2" fill="#30a0c0"/><circle cx="124" cy="243" r="1.2" fill="#30a0c0"/><circle cx="128" cy="246" r="1" fill="#30a0c0"/><rect x="131" y="249" width="2" height="2" fill="#111"/><rect x="137" y="233" width="6" height="6" fill="#e8c040" stroke="#8a6a20" stroke-width="0.6"/><rect x="141" y="240.0" width="2.6" height="2.6" fill="#fff" stroke="#555" stroke-width="0.5"/><line x1="145" y1="241.3" x2="152" y2="241.3" stroke="#5a8ad0" stroke-width="1" stroke-dasharray="2 1"/><rect x="141" y="243.3" width="2.6" height="2.6" fill="#30a030" stroke="#555" stroke-width="0.5"/><line x1="145" y1="244.60000000000002" x2="152" y2="244.60000000000002" stroke="#5a8ad0" stroke-width="1" stroke-dasharray="2 1"/><rect x="141" y="246.6" width="2.6" height="2.6" fill="#fff" stroke="#555" stroke-width="0.5"/><line x1="145" y1="247.9" x2="152" y2="247.9" stroke="#5a8ad0" stroke-width="1" stroke-dasharray="2 1"/><rect x="116.5" y="254" width="6" height="6" fill="#f0d060" stroke="#8a7a30" stroke-width="0.6"/><rect x="123" y="261" width="5.5" height="5.5" fill="#f0d060" stroke="#8a7a30" stroke-width="0.6"/><rect x="126" y="264.5" width="5.5" height="5.5" fill="#f0d060" stroke="#8a7a30" stroke-width="0.6"/><path d="M121 256Q126 254 127 260" stroke="#d02020" stroke-width="1.3" fill="none"/><path d="M137 254L143 252L144 258L138 259Z" fill="#30a030"/><path d="M137 254L141 253L141 256Z" fill="#e02020"/><rect x="141" y="259.5" width="2.4" height="2.4" fill="#fff" stroke="#555" stroke-width="0.5"/><rect x="141" y="263" width="2.4" height="2.4" fill="#30a030" stroke="#555" stroke-width="0.5"/><rect x="141" y="266.5" width="2.4" height="2.4" fill="#fff" stroke="#555" stroke-width="0.5"/><path d="M144 260.7H152M144 264.2H152M144 267.7H152" stroke="#5a8ad0" stroke-width="0.9"/><rect x="116.5" y="285" width="15" height="10" fill="#f4f4f4" stroke="#666" stroke-width="0.8"/><path d="M117 281L131 279V284H117Z" fill="#333"/><path d="M119 284L121 280.5M123 284L125 280M127 284L129 279.5" stroke="#fff" stroke-width="1"/><path d="M118 292Q123 286 126 289T131 287" stroke="#d03030" stroke-width="1" fill="none"/><path d="M118 291H130" stroke="#40a040" stroke-width="0.8"/><rect x="137.5" y="285" width="15" height="10" fill="#f4f4f4" stroke="#666" stroke-width="0.8"/><path d="M138 281L152 279V284H138Z" fill="#333"/><path d="M140 284L142 280.5M144 284L146 280M148 284L150 279.5" stroke="#fff" stroke-width="1"/><path d="M139 293Q144 292 146 289T151 285" stroke="#d03030" stroke-width="1" fill="none"/><path d="M139 291H151" stroke="#40a040" stroke-width="0.8"/><rect x="116.5" y="307" width="15" height="10" fill="#f4f4f4" stroke="#666" stroke-width="0.8"/><path d="M117 303L131 301V306H117Z" fill="#333"/><path d="M119 306L121 302.5M123 306L125 302M127 306L129 301.5" stroke="#fff" stroke-width="1"/><path d="M118 313Q120 307 122 311T126 311T131 309" stroke="#d03030" stroke-width="1" fill="none"/><path d="M118 313H130" stroke="#40a040" stroke-width="0.8"/><rect x="137.5" y="302" width="3.5" height="3.5" fill="#fff" stroke="#333" stroke-width="0.7"/><path d="M143 303.8H152" stroke="#3a7ad0" stroke-width="1.4" stroke-dasharray="2 1.2"/><rect x="137.5" y="307" width="3.5" height="3.5" fill="#30a030" stroke="#333" stroke-width="0.7"/><path d="M143 308.8H152" stroke="#3a7ad0" stroke-width="1.4" stroke-dasharray="2 1.2"/><rect x="137.5" y="312" width="3.5" height="3.5" fill="#fff" stroke="#333" stroke-width="0.7"/><path d="M143 313.8H152" stroke="#3a7ad0" stroke-width="1.4" stroke-dasharray="2 1.2"/><path d="M124 335V327M124 335L118 340M124 335L130 340" stroke="#2878d0" stroke-width="1.4"/><path d="M121.5 328L124 324L126.5 328Z M116.5 337L117 341.5L121 339.5Z M131.5 337L131 341.5L127 339.5Z" fill="#2878d0"/><rect x="137.5" y="325.5" width="15" height="13" fill="#ece4c4" stroke="#7a6a40" stroke-width="0.8"/><rect x="138" y="326" width="14" height="3" fill="#3a78c8"/><rect x="139" y="326.6" width="1.6" height="1.6" fill="#fff"/><rect x="140" y="330.5" width="10" height="4" fill="#fff" stroke="#a09878" stroke-width="0.5"/><rect x="139.5" y="335.5" width="2.5" height="2" fill="#6a5a30"/><rect x="143.5" y="335.5" width="2.5" height="2" fill="#6a5a30"/><rect x="147.5" y="335.5" width="2.5" height="2" fill="#6a5a30"/><rect x="116.5" y="350.5" width="15" height="14" fill="#fff" stroke="#6a6a6a" stroke-width="0.8"/><rect x="117" y="351" width="14" height="3.5" fill="#f0c0c0"/><path d="M117 358H131M117 361H131M124 351V364" stroke="#8a8a8a" stroke-width="0.6"/><text x="118" y="354.5" font-size="4" font-family="Liberation Sans" fill="#c02020">X  Y</text><rect x="137.5" y="351.5" width="15" height="13" fill="#ece4c4" stroke="#7a6a40" stroke-width="0.8"/><rect x="138" y="352" width="14" height="3" fill="#3a78c8"/><rect x="139" y="352.6" width="1.6" height="1.6" fill="#fff"/><rect x="140" y="356.5" width="10" height="4" fill="#fff" stroke="#a09878" stroke-width="0.5"/><rect x="139.5" y="361.5" width="2.5" height="2" fill="#6a5a30"/><rect x="143.5" y="361.5" width="2.5" height="2" fill="#6a5a30"/><rect x="147.5" y="361.5" width="2.5" height="2" fill="#6a5a30"/><path d="M116 380H129" stroke="#2a40b0" stroke-width="1.2" stroke-dasharray="1 1"/><path d="M126 377L131 380L126 383" stroke="#2a40b0" stroke-width="1.3" fill="none"/><path d="M117 377V383" stroke="#2a40b0" stroke-width="1"/><rect x="130" y="384" width="1.5" height="1.5" fill="#111"/><path d="M137 385L141 379L144 382L148 376L152 378" stroke="#d02020" stroke-width="1.2" fill="none"/><circle cx="141" cy="379" r="1" fill="#d02020"/><circle cx="144" cy="382" r="1" fill="#d02020"/><circle cx="148" cy="376" r="1" fill="#d02020"/><path d="M117 400Q121 396 125 399T131 398L130 406Q126 403 122 406T116 407Z" fill="#e8d050" stroke="#8a7a30" stroke-width="0.6"/><path d="M138 398Q142 394 146 397T152 396L151 404Q147 401 143 404T137 405Z" fill="#e8d050" stroke="#8a7a30" stroke-width="0.6"/><circle cx="143" cy="406" r="1.8" fill="none" stroke="#3a6ad0" stroke-width="0.8"/><circle cx="147" cy="407" r="1.8" fill="none" stroke="#3a6ad0" stroke-width="0.8"/><rect x="116.5" y="421" width="4" height="14" fill="url(#rb)"/><path d="M116.5 429H131V435H116.5Z" fill="url(#rb)"/><path d="M124 420V433" stroke="#d02020" stroke-width="0.8" stroke-dasharray="1 1"/><rect x="127" y="428" width="4.5" height="4.5" fill="#fff" stroke="#444" stroke-width="0.6"/><rect x="137.5" y="421.5" width="15" height="13" fill="#ece4c4" stroke="#7a6a40" stroke-width="0.8"/><rect x="138" y="422" width="14" height="3" fill="#3a78c8"/><rect x="139" y="422.6" width="1.6" height="1.6" fill="#fff"/><rect x="140" y="426.5" width="10" height="4" fill="#fff" stroke="#a09878" stroke-width="0.5"/><rect x="139.5" y="431.5" width="2.5" height="2" fill="#6a5a30"/><rect x="143.5" y="431.5" width="2.5" height="2" fill="#6a5a30"/><rect x="147.5" y="431.5" width="2.5" height="2" fill="#6a5a30"/><rect x="117.0" y="445.0" width="3.2" height="3.2" fill="#e8d050" stroke="#8a7a30" stroke-width="0.5"/><rect x="120.2" y="445.0" width="3.2" height="3.2" fill="#e8d050" stroke="#8a7a30" stroke-width="0.5"/><rect x="117.0" y="448.2" width="3.2" height="3.2" fill="#e8d050" stroke="#8a7a30" stroke-width="0.5"/><rect x="120.2" y="448.2" width="3.2" height="3.2" fill="#e8d050" stroke="#8a7a30" stroke-width="0.5"/><rect x="117.0" y="451.4" width="3.2" height="3.2" fill="#e8d050" stroke="#8a7a30" stroke-width="0.5"/><rect x="120.2" y="451.4" width="3.2" height="3.2" fill="#e8d050" stroke="#8a7a30" stroke-width="0.5"/><rect x="117.0" y="454.6" width="3.2" height="3.2" fill="#e8d050" stroke="#8a7a30" stroke-width="0.5"/><rect x="120.2" y="454.6" width="3.2" height="3.2" fill="#e8d050" stroke="#8a7a30" stroke-width="0.5"/><path d="M125 452L131 446M125 452L131 458M125 452L130 451" stroke="#d02020" stroke-width="1.2"/><rect x="137.5" y="446.5" width="15" height="13" fill="#ece4c4" stroke="#7a6a40" stroke-width="0.8"/><rect x="138" y="447" width="14" height="3" fill="#3a78c8"/><rect x="139" y="447.6" width="1.6" height="1.6" fill="#fff"/><rect x="140" y="451.5" width="10" height="4" fill="#fff" stroke="#a09878" stroke-width="0.5"/><rect x="139.5" y="456.5" width="2.5" height="2" fill="#6a5a30"/><rect x="143.5" y="456.5" width="2.5" height="2" fill="#6a5a30"/><rect x="147.5" y="456.5" width="2.5" height="2" fill="#6a5a30"/><path d="M116 471Q124 466 133 471V484Q124 479 116 484Z" fill="#40a040"/><path d="M116 474Q124 470 133 474V481Q124 477 116 481Z" fill="#e8c030"/><path d="M116 476Q124 474 133 476V479Q124 477 116 479Z" fill="#3a70d0"/><circle cx="124.5" cy="477.5" r="2.5" fill="#30b0c0" stroke="#1a5a80" stroke-width="0.6"/><rect x="137.5" y="471.5" width="15" height="13" fill="#ece4c4" stroke="#7a6a40" stroke-width="0.8"/><rect x="138" y="472" width="14" height="3" fill="#3a78c8"/><rect x="139" y="472.6" width="1.6" height="1.6" fill="#fff"/><rect x="140" y="476.5" width="10" height="4" fill="#fff" stroke="#a09878" stroke-width="0.5"/><rect x="139.5" y="481.5" width="2.5" height="2" fill="#6a5a30"/><rect x="143.5" y="481.5" width="2.5" height="2" fill="#6a5a30"/><rect x="147.5" y="481.5" width="2.5" height="2" fill="#6a5a30"/><rect x="116" y="495" width="6" height="5" fill="#2a5aa0"/><rect x="122" y="500" width="6" height="5" fill="#2a5aa0"/><rect x="125" y="503" width="6" height="6" fill="#3a7ad0" stroke="#1a3a70" stroke-width="0.5"/><path d="M122 497Q127 495 128 500" stroke="#e05020" stroke-width="1.2" fill="none"/><rect x="137.5" y="496.5" width="15" height="13" fill="#ece4c4" stroke="#7a6a40" stroke-width="0.8"/><rect x="138" y="497" width="14" height="3" fill="#3a78c8"/><rect x="139" y="497.6" width="1.6" height="1.6" fill="#fff"/><rect x="140" y="501.5" width="10" height="4" fill="#fff" stroke="#a09878" stroke-width="0.5"/><rect x="139.5" y="506.5" width="2.5" height="2" fill="#6a5a30"/><rect x="143.5" y="506.5" width="2.5" height="2" fill="#6a5a30"/><rect x="147.5" y="506.5" width="2.5" height="2" fill="#6a5a30"/><path d="M117.5 526.5L126 533.5" stroke="#282828" stroke-width="3.2" stroke-linecap="round"/><path d="M120 524Q123 522 125 523Q127 522.5 129 521" stroke="#555" stroke-width="1" fill="none"/></svg><div style="left:1097px;top:118px;width:1px;height:418px;background:#e0e0e0"></div><div style="left:157px;top:120px;width:940px;height:413px;background:linear-gradient(#1d2b46 0%,#26354f 31.5%,#2e3d57 62.5%,#435270 69%,#67768f 79.9%,#a7b2c6 100%)"></div><svg style="left:0;top:0" width="1098" height="606" viewBox="0 0 1098 606"><defs><clipPath id="damclip"><path d="M548.3 156.1L546.7 166.0L545.2 175.7L543.6 185.2L542.2 194.4L540.8 203.4L539.4 212.2L538.0 220.7L536.7 229.1L535.4 237.2L534.1 245.0L532.9 252.7L531.8 260.1L530.8 267.3L529.8 274.3L528.8 281.0L528.2 286.4L527.6 292.1L526.9 298.3L526.2 304.8L525.4 311.7L524.6 319.0L524.0 326.7L523.4 334.8L522.8 343.2L522.2 352.0L521.6 361.3L520.9 370.9L520.5 380.9L520.1 391.2L519.7 402.0L519.2 413.1L518.8 424.6L518.7 436.5L518.5 448.8L518.3 461.5L518.2 474.6L518.0 488.0L737.3 488.0L726.9 474.2L716.7 460.9L706.9 447.9L697.4 435.3L688.1 423.1L679.3 411.3L670.8 399.9L662.6 388.9L654.7 378.3L647.3 368.0L640.3 358.2L633.6 348.8L627.2 339.7L621.1 331.1L615.3 322.8L610.5 314.9L605.9 307.5L601.6 300.4L597.5 293.7L593.9 287.4L591.0 281.5L589.0 276.0L589.4 270.0L589.9 263.7L590.3 257.3L590.8 250.7L591.2 243.8L591.7 236.8L592.2 229.5L592.8 222.1L593.3 214.5L593.8 206.6L594.4 198.5L595.0 190.3L595.6 181.8L596.2 173.2L596.8 164.3Z"/></clipPath></defs><g clip-path="url(#damclip)"><path d="M500.0 399.0L504.0 399.0L508.0 399.0L512.0 399.0L516.0 399.0L520.0 396.0L524.0 393.1L528.0 390.2L532.0 387.4L536.0 384.8L540.0 382.3L544.0 380.0L548.0 377.9L552.0 376.1L556.0 374.5L560.0 373.2L564.0 372.2L568.0 371.5L572.0 371.1L576.0 371.0L580.0 371.0L584.0 370.9L588.0 370.9L592.0 370.9L596.0 370.9L600.0 370.8L604.0 370.8L608.0 370.8L612.0 370.8L616.0 370.8L620.0 370.7L624.0 370.7L628.0 370.7L632.0 370.7L636.0 370.6L640.0 370.6L644.0 370.6L648.0 370.6L652.0 370.5L656.0 370.5L660.0 370.5L664.0 370.5L668.0 370.4L672.0 370.4L676.0 370.4L680.0 370.4L684.0 370.3L688.0 370.3L692.0 370.3L696.0 370.3L700.0 370.2L704.0 370.2L708.0 370.2L712.0 370.2L716.0 370.1L720.0 370.1L724.0 370.1L728.0 370.1L732.0 370.0L736.0 370.0L740.0 370.0L744.0 370.0L748.0 370.0L752.0 369.9L756.0 369.9L760.0 369.9L760.0 500.0L756.0 500.0L752.0 500.0L748.0 500.0L744.0 500.0L740.0 500.0L736.0 500.0L732.0 500.0L728.0 500.0L724.0 500.0L720.0 500.0L716.0 500.0L712.0 500.0L708.0 500.0L704.0 500.0L700.0 500.0L696.0 500.0L692.0 500.0L688.0 500.0L684.0 500.0L680.0 500.0L676.0 500.0L672.0 500.0L668.0 500.0L664.0 500.0L660.0 500.0L656.0 500.0L652.0 500.0L648.0 500.0L644.0 500.0L640.0 500.0L636.0 500.0L632.0 500.0L628.0 500.0L624.0 500.0L620.0 500.0L616.0 500.0L612.0 500.0L608.0 500.0L604.0 500.0L600.0 500.0L596.0 500.0L592.0 500.0L588.0 500.0L584.0 500.0L580.0 500.0L576.0 500.0L572.0 500.0L568.0 500.0L564.0 500.0L560.0 500.0L556.0 500.0L552.0 500.0L548.0 500.0L544.0 500.0L540.0 500.0L536.0 500.0L532.0 500.0L528.0 500.0L524.0 500.0L520.0 500.0L516.0 500.0L512.0 500.0L508.0 500.0L504.0 500.0L500.0 500.0Z" fill="#1c1cd8"/><path d="M500.0 346.0L504.0 346.0L508.0 346.0L512.0 346.0L516.0 346.0L520.0 343.9L524.0 341.8L528.0 339.7L532.0 337.7L536.0 335.8L540.0 334.1L544.0 332.4L548.0 330.9L552.0 329.6L556.0 328.5L560.0 327.6L564.0 326.9L568.0 326.3L572.0 326.1L576.0 326.0L580.0 325.9L584.0 325.8L588.0 325.7L592.0 325.6L596.0 325.5L600.0 325.4L604.0 325.3L608.0 325.2L612.0 325.1L616.0 325.0L620.0 324.9L624.0 324.8L628.0 324.7L632.0 324.6L636.0 324.5L640.0 324.4L644.0 324.3L648.0 324.2L652.0 324.1L656.0 324.0L660.0 323.9L664.0 323.8L668.0 323.7L672.0 323.6L676.0 323.6L680.0 323.5L684.0 323.4L688.0 323.3L692.0 323.2L696.0 323.1L700.0 323.0L704.0 322.9L708.0 322.8L712.0 322.7L716.0 322.6L720.0 322.5L724.0 322.4L728.0 322.3L732.0 322.2L736.0 322.1L740.0 322.0L744.0 321.9L748.0 321.8L752.0 321.7L756.0 321.6L760.0 321.5L760.0 369.9L756.0 369.9L752.0 369.9L748.0 370.0L744.0 370.0L740.0 370.0L736.0 370.0L732.0 370.0L728.0 370.1L724.0 370.1L720.0 370.1L716.0 370.1L712.0 370.2L708.0 370.2L704.0 370.2L700.0 370.2L696.0 370.3L692.0 370.3L688.0 370.3L684.0 370.3L680.0 370.4L676.0 370.4L672.0 370.4L668.0 370.4L664.0 370.5L660.0 370.5L656.0 370.5L652.0 370.5L648.0 370.6L644.0 370.6L640.0 370.6L636.0 370.6L632.0 370.7L628.0 370.7L624.0 370.7L620.0 370.7L616.0 370.8L612.0 370.8L608.0 370.8L604.0 370.8L600.0 370.8L596.0 370.9L592.0 370.9L588.0 370.9L584.0 370.9L580.0 371.0L576.0 371.0L572.0 371.1L568.0 371.5L564.0 372.2L560.0 373.2L556.0 374.5L552.0 376.1L548.0 377.9L544.0 380.0L540.0 382.3L536.0 384.8L532.0 387.4L528.0 390.2L524.0 393.1L520.0 396.0L516.0 399.0L512.0 399.0L508.0 399.0L504.0 399.0L500.0 399.0Z" fill="#1c60d8"/><path d="M500.0 311.8L504.0 311.0L508.0 310.3L512.0 309.5L516.0 308.8L520.0 308.0L524.0 307.2L528.0 306.5L532.0 305.7L536.0 305.0L540.0 304.2L544.0 303.5L548.0 302.7L552.0 302.0L556.0 301.2L560.0 300.4L564.0 299.7L568.0 298.9L572.0 298.2L576.0 297.4L580.0 296.7L584.0 295.9L588.0 295.2L592.0 294.4L596.0 293.6L600.0 292.9L604.0 292.1L608.0 291.4L612.0 290.6L616.0 289.9L620.0 289.1L624.0 288.4L628.0 287.6L632.0 286.8L636.0 286.1L640.0 285.3L644.0 284.6L648.0 283.8L652.0 283.1L656.0 282.3L660.0 281.6L664.0 280.8L668.0 280.0L672.0 279.3L676.0 278.5L680.0 277.8L684.0 277.0L688.0 276.3L692.0 275.5L696.0 274.8L700.0 274.0L704.0 273.2L708.0 272.5L712.0 271.7L716.0 271.0L720.0 270.2L724.0 269.5L728.0 268.7L732.0 268.0L736.0 267.2L740.0 266.4L744.0 265.7L748.0 264.9L752.0 264.2L756.0 263.4L760.0 262.7L760.0 321.5L756.0 321.6L752.0 321.7L748.0 321.8L744.0 321.9L740.0 322.0L736.0 322.1L732.0 322.2L728.0 322.3L724.0 322.4L720.0 322.5L716.0 322.6L712.0 322.7L708.0 322.8L704.0 322.9L700.0 323.0L696.0 323.1L692.0 323.2L688.0 323.3L684.0 323.4L680.0 323.5L676.0 323.6L672.0 323.6L668.0 323.7L664.0 323.8L660.0 323.9L656.0 324.0L652.0 324.1L648.0 324.2L644.0 324.3L640.0 324.4L636.0 324.5L632.0 324.6L628.0 324.7L624.0 324.8L620.0 324.9L616.0 325.0L612.0 325.1L608.0 325.2L604.0 325.3L600.0 325.4L596.0 325.5L592.0 325.6L588.0 325.7L584.0 325.8L580.0 325.9L576.0 326.0L572.0 326.1L568.0 326.3L564.0 326.9L560.0 327.6L556.0 328.5L552.0 329.6L548.0 330.9L544.0 332.4L540.0 334.1L536.0 335.8L532.0 337.7L528.0 339.7L524.0 341.8L520.0 343.9L516.0 346.0L512.0 346.0L508.0 346.0L504.0 346.0L500.0 346.0Z" fill="#1ca4d8"/><path d="M500.0 298.8L504.0 298.0L508.0 297.2L512.0 296.5L516.0 295.8L520.0 295.0L524.0 294.2L528.0 293.5L532.0 292.8L536.0 292.0L540.0 291.2L544.0 290.5L548.0 289.8L552.0 289.0L556.0 288.2L560.0 287.5L564.0 286.8L568.0 286.0L572.0 285.2L576.0 284.5L580.0 283.8L584.0 283.0L588.0 282.2L592.0 281.5L596.0 280.8L600.0 280.0L604.0 279.2L608.0 278.5L612.0 277.8L616.0 277.0L620.0 276.2L624.0 275.5L628.0 274.8L632.0 274.0L636.0 273.2L640.0 272.5L644.0 271.8L648.0 271.0L652.0 270.2L656.0 269.5L660.0 268.8L664.0 268.0L668.0 267.2L672.0 266.5L676.0 265.8L680.0 265.0L684.0 264.2L688.0 263.5L692.0 262.8L696.0 262.0L700.0 261.2L704.0 260.5L708.0 259.8L712.0 259.0L716.0 258.2L720.0 257.5L724.0 256.8L728.0 256.0L732.0 255.2L736.0 254.5L740.0 253.8L744.0 253.0L748.0 252.2L752.0 251.5L756.0 250.8L760.0 250.0L760.0 262.7L756.0 263.4L752.0 264.2L748.0 264.9L744.0 265.7L740.0 266.4L736.0 267.2L732.0 268.0L728.0 268.7L724.0 269.5L720.0 270.2L716.0 271.0L712.0 271.7L708.0 272.5L704.0 273.2L700.0 274.0L696.0 274.8L692.0 275.5L688.0 276.3L684.0 277.0L680.0 277.8L676.0 278.5L672.0 279.3L668.0 280.0L664.0 280.8L660.0 281.6L656.0 282.3L652.0 283.1L648.0 283.8L644.0 284.6L640.0 285.3L636.0 286.1L632.0 286.8L628.0 287.6L624.0 288.4L620.0 289.1L616.0 289.9L612.0 290.6L608.0 291.4L604.0 292.1L600.0 292.9L596.0 293.6L592.0 294.4L588.0 295.2L584.0 295.9L580.0 296.7L576.0 297.4L572.0 298.2L568.0 298.9L564.0 299.7L560.0 300.4L556.0 301.2L552.0 302.0L548.0 302.7L544.0 303.5L540.0 304.2L536.0 305.0L532.0 305.7L528.0 306.5L524.0 307.2L520.0 308.0L516.0 308.8L512.0 309.5L508.0 310.3L504.0 311.0L500.0 311.8Z" fill="#1cd8c7"/><path d="M500.0 281.0L504.0 280.6L508.0 280.2L512.0 279.8L516.0 279.4L520.0 279.0L524.0 278.6L528.0 278.2L532.0 277.8L536.0 277.4L540.0 277.0L544.0 276.6L548.0 276.2L552.0 275.8L556.0 275.4L560.0 275.0L564.0 274.6L568.0 274.2L572.0 273.8L576.0 273.4L580.0 273.0L584.0 272.6L588.0 272.2L592.0 271.8L596.0 271.4L600.0 271.0L604.0 270.6L608.0 270.2L612.0 269.8L616.0 269.4L620.0 269.0L624.0 268.6L628.0 268.2L632.0 267.8L636.0 267.4L640.0 267.0L644.0 266.6L648.0 266.2L652.0 265.8L656.0 265.4L660.0 265.0L664.0 264.6L668.0 264.2L672.0 263.8L676.0 263.4L680.0 263.0L684.0 262.6L688.0 262.2L692.0 261.8L696.0 261.4L700.0 261.0L704.0 260.6L708.0 260.2L712.0 259.8L716.0 259.4L720.0 259.0L724.0 258.6L728.0 258.2L732.0 257.8L736.0 257.4L740.0 257.0L744.0 256.6L748.0 256.2L752.0 255.8L756.0 255.4L760.0 255.0L760.0 250.0L756.0 250.8L752.0 251.5L748.0 252.2L744.0 253.0L740.0 253.8L736.0 254.5L732.0 255.2L728.0 256.0L724.0 256.8L720.0 257.5L716.0 258.2L712.0 259.0L708.0 259.8L704.0 260.5L700.0 261.2L696.0 262.0L692.0 262.8L688.0 263.5L684.0 264.2L680.0 265.0L676.0 265.8L672.0 266.5L668.0 267.2L664.0 268.0L660.0 268.8L656.0 269.5L652.0 270.2L648.0 271.0L644.0 271.8L640.0 272.5L636.0 273.2L632.0 274.0L628.0 274.8L624.0 275.5L620.0 276.2L616.0 277.0L612.0 277.8L608.0 278.5L604.0 279.2L600.0 280.0L596.0 280.8L592.0 281.5L588.0 282.2L584.0 283.0L580.0 283.8L576.0 284.5L572.0 285.2L568.0 286.0L564.0 286.8L560.0 287.5L556.0 288.2L552.0 289.0L548.0 289.8L544.0 290.5L540.0 291.2L536.0 292.0L532.0 292.8L528.0 293.5L524.0 294.2L520.0 295.0L516.0 295.8L512.0 296.5L508.0 297.2L504.0 298.0L500.0 298.8Z" fill="#1cd882"/><path d="M500.0 246.6L504.0 246.8L508.0 247.0L512.0 247.2L516.0 247.4L520.0 247.6L524.0 247.8L528.0 248.0L532.0 248.2L536.0 248.4L540.0 248.6L544.0 248.8L548.0 249.0L552.0 249.2L556.0 249.4L560.0 249.6L564.0 249.8L568.0 250.0L572.0 250.2L576.0 250.4L580.0 250.6L584.0 250.8L588.0 251.0L592.0 251.2L596.0 251.4L600.0 251.7L604.0 251.9L608.0 252.1L612.0 252.3L616.0 252.5L620.0 252.7L624.0 252.9L628.0 253.1L632.0 253.3L636.0 253.5L640.0 253.7L644.0 253.9L648.0 254.1L652.0 254.3L656.0 254.5L660.0 254.7L664.0 254.9L668.0 255.1L672.0 255.3L676.0 255.5L680.0 255.7L684.0 255.9L688.0 256.1L692.0 256.3L696.0 256.6L700.0 256.8L704.0 257.0L708.0 257.2L712.0 257.4L716.0 257.6L720.0 257.8L724.0 258.0L728.0 258.2L732.0 258.4L736.0 258.6L740.0 258.8L744.0 259.0L748.0 259.2L752.0 259.4L756.0 259.6L760.0 259.8L760.0 255.0L756.0 255.4L752.0 255.8L748.0 256.2L744.0 256.6L740.0 257.0L736.0 257.4L732.0 257.8L728.0 258.2L724.0 258.6L720.0 259.0L716.0 259.4L712.0 259.8L708.0 260.2L704.0 260.6L700.0 261.0L696.0 261.4L692.0 261.8L688.0 262.2L684.0 262.6L680.0 263.0L676.0 263.4L672.0 263.8L668.0 264.2L664.0 264.6L660.0 265.0L656.0 265.4L652.0 265.8L648.0 266.2L644.0 266.6L640.0 267.0L636.0 267.4L632.0 267.8L628.0 268.2L624.0 268.6L620.0 269.0L616.0 269.4L612.0 269.8L608.0 270.2L604.0 270.6L600.0 271.0L596.0 271.4L592.0 271.8L588.0 272.2L584.0 272.6L580.0 273.0L576.0 273.4L572.0 273.8L568.0 274.2L564.0 274.6L560.0 275.0L556.0 275.4L552.0 275.8L548.0 276.2L544.0 276.6L540.0 277.0L536.0 277.4L532.0 277.8L528.0 278.2L524.0 278.6L520.0 279.0L516.0 279.4L512.0 279.8L508.0 280.2L504.0 280.6L500.0 281.0Z" fill="#0eee36"/><path d="M500.0 226.4L504.0 226.6L508.0 226.8L512.0 227.0L516.0 227.2L520.0 227.5L524.0 227.7L528.0 227.9L532.0 228.1L536.0 228.3L540.0 228.6L544.0 228.8L548.0 229.0L552.0 229.2L556.0 229.4L560.0 229.7L564.0 229.9L568.0 230.1L572.0 230.3L576.0 230.5L580.0 230.8L584.0 231.0L588.0 231.2L592.0 231.4L596.0 231.6L600.0 231.9L604.0 232.1L608.0 232.3L612.0 232.5L616.0 232.7L620.0 233.0L624.0 233.2L628.0 233.4L632.0 233.6L636.0 233.8L640.0 234.1L644.0 234.3L648.0 234.5L652.0 234.7L656.0 235.0L660.0 235.2L664.0 235.4L668.0 235.6L672.0 235.8L676.0 236.1L680.0 236.3L684.0 236.5L688.0 236.7L692.0 236.9L696.0 237.2L700.0 237.4L704.0 237.6L708.0 237.8L712.0 238.0L716.0 238.3L720.0 238.5L724.0 238.7L728.0 238.9L732.0 239.1L736.0 239.4L740.0 239.6L744.0 239.8L748.0 240.0L752.0 240.2L756.0 240.5L760.0 240.7L760.0 259.8L756.0 259.6L752.0 259.4L748.0 259.2L744.0 259.0L740.0 258.8L736.0 258.6L732.0 258.4L728.0 258.2L724.0 258.0L720.0 257.8L716.0 257.6L712.0 257.4L708.0 257.2L704.0 257.0L700.0 256.8L696.0 256.6L692.0 256.3L688.0 256.1L684.0 255.9L680.0 255.7L676.0 255.5L672.0 255.3L668.0 255.1L664.0 254.9L660.0 254.7L656.0 254.5L652.0 254.3L648.0 254.1L644.0 253.9L640.0 253.7L636.0 253.5L632.0 253.3L628.0 253.1L624.0 252.9L620.0 252.7L616.0 252.5L612.0 252.3L608.0 252.1L604.0 251.9L600.0 251.7L596.0 251.4L592.0 251.2L588.0 251.0L584.0 250.8L580.0 250.6L576.0 250.4L572.0 250.2L568.0 250.0L564.0 249.8L560.0 249.6L556.0 249.4L552.0 249.2L548.0 249.0L544.0 248.8L540.0 248.6L536.0 248.4L532.0 248.2L528.0 248.0L524.0 247.8L520.0 247.6L516.0 247.4L512.0 247.2L508.0 247.0L504.0 246.8L500.0 246.6Z" fill="#36ee0e"/><path d="M500.0 208.5L504.0 208.8L508.0 209.1L512.0 209.4L516.0 209.6L520.0 209.9L524.0 210.2L528.0 210.5L532.0 210.8L536.0 211.1L540.0 211.4L544.0 211.7L548.0 212.0L552.0 212.3L556.0 212.6L560.0 212.9L564.0 213.2L568.0 213.5L572.0 213.8L576.0 214.1L580.0 214.4L584.0 214.6L588.0 214.9L592.0 215.2L596.0 215.5L600.0 215.8L604.0 216.1L608.0 216.4L612.0 216.7L616.0 217.0L620.0 217.3L624.0 217.6L628.0 217.9L632.0 218.2L636.0 218.5L640.0 218.8L644.0 219.1L648.0 219.3L652.0 219.6L656.0 219.9L660.0 220.2L664.0 220.5L668.0 220.8L672.0 221.1L676.0 221.4L680.0 221.7L684.0 222.0L688.0 222.3L692.0 222.6L696.0 222.9L700.0 223.2L704.0 223.5L708.0 223.8L712.0 224.0L716.0 224.3L720.0 224.6L724.0 224.9L728.0 225.2L732.0 225.5L736.0 225.8L740.0 226.1L744.0 226.4L748.0 226.7L752.0 227.0L756.0 227.3L760.0 227.6L760.0 240.7L756.0 240.5L752.0 240.2L748.0 240.0L744.0 239.8L740.0 239.6L736.0 239.4L732.0 239.1L728.0 238.9L724.0 238.7L720.0 238.5L716.0 238.3L712.0 238.0L708.0 237.8L704.0 237.6L700.0 237.4L696.0 237.2L692.0 236.9L688.0 236.7L684.0 236.5L680.0 236.3L676.0 236.1L672.0 235.8L668.0 235.6L664.0 235.4L660.0 235.2L656.0 235.0L652.0 234.7L648.0 234.5L644.0 234.3L640.0 234.1L636.0 233.8L632.0 233.6L628.0 233.4L624.0 233.2L620.0 233.0L616.0 232.7L612.0 232.5L608.0 232.3L604.0 232.1L600.0 231.9L596.0 231.6L592.0 231.4L588.0 231.2L584.0 231.0L580.0 230.8L576.0 230.5L572.0 230.3L568.0 230.1L564.0 229.9L560.0 229.7L556.0 229.4L552.0 229.2L548.0 229.0L544.0 228.8L540.0 228.6L536.0 228.3L532.0 228.1L528.0 227.9L524.0 227.7L520.0 227.5L516.0 227.2L512.0 227.0L508.0 226.8L504.0 226.6L500.0 226.4Z" fill="#88ee0e"/><path d="M500.0 193.1L504.0 193.5L508.0 193.9L512.0 194.3L516.0 194.7L520.0 195.1L524.0 195.6L528.0 196.0L532.0 196.4L536.0 196.8L540.0 197.2L544.0 197.6L548.0 198.0L552.0 198.4L556.0 198.8L560.0 199.2L564.0 199.6L568.0 200.0L572.0 200.4L576.0 200.9L580.0 201.3L584.0 201.7L588.0 202.1L592.0 202.5L596.0 202.9L600.0 203.3L604.0 203.7L608.0 204.1L612.0 204.5L616.0 204.9L620.0 205.3L624.0 205.8L628.0 206.2L632.0 206.6L636.0 207.0L640.0 207.4L644.0 207.8L648.0 208.2L652.0 208.6L656.0 209.0L660.0 209.4L664.0 209.8L668.0 210.2L672.0 210.7L676.0 211.1L680.0 211.5L684.0 211.9L688.0 212.3L692.0 212.7L696.0 213.1L700.0 213.5L704.0 213.9L708.0 214.3L712.0 214.7L716.0 215.1L720.0 215.6L724.0 216.0L728.0 216.4L732.0 216.8L736.0 217.2L740.0 217.6L744.0 218.0L748.0 218.4L752.0 218.8L756.0 219.2L760.0 219.6L760.0 227.6L756.0 227.3L752.0 227.0L748.0 226.7L744.0 226.4L740.0 226.1L736.0 225.8L732.0 225.5L728.0 225.2L724.0 224.9L720.0 224.6L716.0 224.3L712.0 224.0L708.0 223.8L704.0 223.5L700.0 223.2L696.0 222.9L692.0 222.6L688.0 222.3L684.0 222.0L680.0 221.7L676.0 221.4L672.0 221.1L668.0 220.8L664.0 220.5L660.0 220.2L656.0 219.9L652.0 219.6L648.0 219.3L644.0 219.1L640.0 218.8L636.0 218.5L632.0 218.2L628.0 217.9L624.0 217.6L620.0 217.3L616.0 217.0L612.0 216.7L608.0 216.4L604.0 216.1L600.0 215.8L596.0 215.5L592.0 215.2L588.0 214.9L584.0 214.6L580.0 214.4L576.0 214.1L572.0 213.8L568.0 213.5L564.0 213.2L560.0 212.9L556.0 212.6L552.0 212.3L548.0 212.0L544.0 211.7L540.0 211.4L536.0 211.1L532.0 210.8L528.0 210.5L524.0 210.2L520.0 209.9L516.0 209.6L512.0 209.4L508.0 209.1L504.0 208.8L500.0 208.5Z" fill="#daee0e"/><path d="M500.0 179.1L504.0 179.4L508.0 179.7L512.0 180.1L516.0 180.4L520.0 180.7L524.0 181.0L528.0 181.4L532.0 181.7L536.0 182.0L540.0 182.3L544.0 182.7L548.0 183.0L552.0 183.3L556.0 183.7L560.0 184.0L564.0 184.3L568.0 184.6L572.0 185.0L576.0 185.3L580.0 185.6L584.0 185.9L588.0 186.3L592.0 186.6L596.0 186.9L600.0 187.2L604.0 187.6L608.0 187.9L612.0 188.2L616.0 188.6L620.0 188.9L624.0 189.2L628.0 189.5L632.0 189.9L636.0 190.2L640.0 190.5L644.0 190.8L648.0 191.2L652.0 191.5L656.0 191.8L660.0 192.1L664.0 192.5L668.0 192.8L672.0 193.1L676.0 193.4L680.0 193.8L684.0 194.1L688.0 194.4L692.0 194.8L696.0 195.1L700.0 195.4L704.0 195.7L708.0 196.1L712.0 196.4L716.0 196.7L720.0 197.0L724.0 197.4L728.0 197.7L732.0 198.0L736.0 198.3L740.0 198.7L744.0 199.0L748.0 199.3L752.0 199.7L756.0 200.0L760.0 200.3L760.0 219.6L756.0 219.2L752.0 218.8L748.0 218.4L744.0 218.0L740.0 217.6L736.0 217.2L732.0 216.8L728.0 216.4L724.0 216.0L720.0 215.6L716.0 215.1L712.0 214.7L708.0 214.3L704.0 213.9L700.0 213.5L696.0 213.1L692.0 212.7L688.0 212.3L684.0 211.9L680.0 211.5L676.0 211.1L672.0 210.7L668.0 210.2L664.0 209.8L660.0 209.4L656.0 209.0L652.0 208.6L648.0 208.2L644.0 207.8L640.0 207.4L636.0 207.0L632.0 206.6L628.0 206.2L624.0 205.8L620.0 205.3L616.0 204.9L612.0 204.5L608.0 204.1L604.0 203.7L600.0 203.3L596.0 202.9L592.0 202.5L588.0 202.1L584.0 201.7L580.0 201.3L576.0 200.9L572.0 200.4L568.0 200.0L564.0 199.6L560.0 199.2L556.0 198.8L552.0 198.4L548.0 198.0L544.0 197.6L540.0 197.2L536.0 196.8L532.0 196.4L528.0 196.0L524.0 195.6L520.0 195.1L516.0 194.7L512.0 194.3L508.0 193.9L504.0 193.5L500.0 193.1Z" fill="#eeb00e"/><path d="M500.0 165.1L504.0 165.7L508.0 166.2L512.0 166.7L516.0 167.3L520.0 167.8L524.0 168.3L528.0 168.8L532.0 169.4L536.0 169.9L540.0 170.4L544.0 171.0L548.0 171.5L552.0 172.0L556.0 172.6L560.0 173.1L564.0 173.6L568.0 174.2L572.0 174.7L576.0 175.2L580.0 175.7L584.0 176.3L588.0 176.8L592.0 177.3L596.0 177.9L600.0 178.4L604.0 178.9L608.0 179.5L612.0 180.0L616.0 180.5L620.0 181.1L624.0 181.6L628.0 182.1L632.0 182.6L636.0 183.2L640.0 183.7L644.0 184.2L648.0 184.8L652.0 185.3L656.0 185.8L660.0 186.4L664.0 186.9L668.0 187.4L672.0 187.9L676.0 188.5L680.0 189.0L684.0 189.5L688.0 190.1L692.0 190.6L696.0 191.1L700.0 191.7L704.0 192.2L708.0 192.7L712.0 193.3L716.0 193.8L720.0 194.3L724.0 194.8L728.0 195.4L732.0 195.9L736.0 196.4L740.0 197.0L744.0 197.5L748.0 198.0L752.0 198.6L756.0 199.1L760.0 199.6L760.0 200.3L756.0 200.0L752.0 199.7L748.0 199.3L744.0 199.0L740.0 198.7L736.0 198.3L732.0 198.0L728.0 197.7L724.0 197.4L720.0 197.0L716.0 196.7L712.0 196.4L708.0 196.1L704.0 195.7L700.0 195.4L696.0 195.1L692.0 194.8L688.0 194.4L684.0 194.1L680.0 193.8L676.0 193.4L672.0 193.1L668.0 192.8L664.0 192.5L660.0 192.1L656.0 191.8L652.0 191.5L648.0 191.2L644.0 190.8L640.0 190.5L636.0 190.2L632.0 189.9L628.0 189.5L624.0 189.2L620.0 188.9L616.0 188.6L612.0 188.2L608.0 187.9L604.0 187.6L600.0 187.2L596.0 186.9L592.0 186.6L588.0 186.3L584.0 185.9L580.0 185.6L576.0 185.3L572.0 185.0L568.0 184.6L564.0 184.3L560.0 184.0L556.0 183.7L552.0 183.3L548.0 183.0L544.0 182.7L540.0 182.3L536.0 182.0L532.0 181.7L528.0 181.4L524.0 181.0L520.0 180.7L516.0 180.4L512.0 180.1L508.0 179.7L504.0 179.4L500.0 179.1Z" fill="#ee5f0e"/><path d="M500.0 100.0L504.0 100.0L508.0 100.0L512.0 100.0L516.0 100.0L520.0 100.0L524.0 100.0L528.0 100.0L532.0 100.0L536.0 100.0L540.0 100.0L544.0 100.0L548.0 100.0L552.0 100.0L556.0 100.0L560.0 100.0L564.0 100.0L568.0 100.0L572.0 100.0L576.0 100.0L580.0 100.0L584.0 100.0L588.0 100.0L592.0 100.0L596.0 100.0L600.0 100.0L604.0 100.0L608.0 100.0L612.0 100.0L616.0 100.0L620.0 100.0L624.0 100.0L628.0 100.0L632.0 100.0L636.0 100.0L640.0 100.0L644.0 100.0L648.0 100.0L652.0 100.0L656.0 100.0L660.0 100.0L664.0 100.0L668.0 100.0L672.0 100.0L676.0 100.0L680.0 100.0L684.0 100.0L688.0 100.0L692.0 100.0L696.0 100.0L700.0 100.0L704.0 100.0L708.0 100.0L712.0 100.0L716.0 100.0L720.0 100.0L724.0 100.0L728.0 100.0L732.0 100.0L736.0 100.0L740.0 100.0L744.0 100.0L748.0 100.0L752.0 100.0L756.0 100.0L760.0 100.0L760.0 199.6L756.0 199.1L752.0 198.6L748.0 198.0L744.0 197.5L740.0 197.0L736.0 196.4L732.0 195.9L728.0 195.4L724.0 194.8L720.0 194.3L716.0 193.8L712.0 193.3L708.0 192.7L704.0 192.2L700.0 191.7L696.0 191.1L692.0 190.6L688.0 190.1L684.0 189.5L680.0 189.0L676.0 188.5L672.0 187.9L668.0 187.4L664.0 186.9L660.0 186.4L656.0 185.8L652.0 185.3L648.0 184.8L644.0 184.2L640.0 183.7L636.0 183.2L632.0 182.6L628.0 182.1L624.0 181.6L620.0 181.1L616.0 180.5L612.0 180.0L608.0 179.5L604.0 178.9L600.0 178.4L596.0 177.9L592.0 177.3L588.0 176.8L584.0 176.3L580.0 175.7L576.0 175.2L572.0 174.7L568.0 174.2L564.0 173.6L560.0 173.1L556.0 172.6L552.0 172.0L548.0 171.5L544.0 171.0L540.0 170.4L536.0 169.9L532.0 169.4L528.0 168.8L524.0 168.3L520.0 167.8L516.0 167.3L512.0 166.7L508.0 166.2L504.0 165.7L500.0 165.1Z" fill="#ee0e0e"/></g><path d="M548.3 156.1L596.8 164.3M546.7 166.0L596.2 173.2M545.2 175.7L595.6 181.8M543.6 185.2L595.0 190.3M542.2 194.4L594.4 198.5M540.8 203.4L593.8 206.6M539.4 212.2L593.3 214.5M538.0 220.7L592.8 222.1M536.7 229.1L592.2 229.5M535.4 237.2L591.7 236.8M534.1 245.0L591.2 243.8M532.9 252.7L590.8 250.7M531.8 260.1L590.3 257.3M530.8 267.3L589.9 263.7M529.8 274.3L589.4 270.0M528.8 281.0L589.0 276.0M528.2 286.4L591.0 281.5M527.6 292.1L593.9 287.4M526.9 298.3L597.5 293.7M526.2 304.8L601.6 300.4M525.4 311.7L605.9 307.5M524.6 319.0L610.5 314.9M524.0 326.7L615.3 322.8M523.4 334.8L621.1 331.1M522.8 343.2L627.2 339.7M522.2 352.0L633.6 348.8M521.6 361.3L640.3 358.2M520.9 370.9L647.3 368.0M520.5 380.9L654.7 378.3M520.1 391.2L662.6 388.9M519.7 402.0L670.8 399.9M519.2 413.1L679.3 411.3M518.8 424.6L688.1 423.1M518.7 436.5L697.4 435.3M518.5 448.8L706.9 447.9M518.3 461.5L716.7 460.9M518.2 474.6L726.9 474.2M518.0 488.0L737.3 488.0M548.3 156.1L546.7 166.0L545.2 175.7L543.6 185.2L542.2 194.4L540.8 203.4L539.4 212.2L538.0 220.7L536.7 229.1L535.4 237.2L534.1 245.0L532.9 252.7L531.8 260.1L530.8 267.3L529.8 274.3L528.8 281.0L528.2 286.4L527.6 292.1L526.9 298.3L526.2 304.8L525.4 311.7L524.6 319.0L524.0 326.7L523.4 334.8L522.8 343.2L522.2 352.0L521.6 361.3L520.9 370.9L520.5 380.9L520.1 391.2L519.7 402.0L519.2 413.1L518.8 424.6L518.7 436.5L518.5 448.8L518.3 461.5L518.2 474.6L518.0 488.0M550.6 156.5L549.1 166.4L547.6 176.0L546.1 185.4L544.7 194.6L543.3 203.6L541.9 212.3L540.6 220.8L539.3 229.1L538.1 237.1L536.8 245.0L535.7 252.6L534.6 260.0L533.6 267.1L532.6 274.1L531.7 280.8L531.2 286.1L530.7 291.9L530.3 298.1L529.8 304.6L529.3 311.5L528.7 318.8L528.3 326.5L528.1 334.6L527.8 343.0L527.5 351.9L527.2 361.1L526.9 370.7L526.9 380.7L526.9 391.1L526.9 401.9L526.9 413.0L526.9 424.6L527.2 436.5L527.5 448.8L527.8 461.5L528.1 474.5L528.4 488.0M552.9 156.9L551.4 166.7L550.0 176.3L548.5 185.6L547.2 194.8L545.8 203.7L544.5 212.4L543.2 220.9L542.0 229.1L540.7 237.1L539.5 244.9L538.4 252.5L537.4 259.8L536.4 267.0L535.5 273.9L534.5 280.5L534.2 285.9L533.9 291.7L533.6 297.8L533.4 304.4L533.1 311.3L532.8 318.6L532.7 326.3L532.7 334.4L532.8 342.9L532.8 351.7L532.9 361.0L532.9 370.6L533.3 380.6L533.7 391.0L534.1 401.8L534.5 412.9L534.9 424.5L535.7 436.4L536.4 448.7L537.2 461.4L538.0 474.5L538.9 488.0M555.2 157.3L553.8 167.0L552.4 176.6L551.0 185.9L549.6 195.0L548.3 203.9L547.1 212.5L545.8 220.9L544.6 229.1L543.4 237.1L542.3 244.9L541.2 252.4L540.2 259.7L539.2 266.8L538.3 273.6L537.4 280.3L537.2 285.7L537.1 291.5L537.0 297.6L537.0 304.2L536.9 311.1L536.9 318.4L537.0 326.1L537.4 334.2L537.7 342.7L538.1 351.6L538.5 360.8L538.9 370.5L539.6 380.5L540.4 390.9L541.3 401.7L542.1 412.9L543.0 424.4L544.2 436.4L545.4 448.7L546.7 461.4L548.0 474.5L549.3 488.0M557.5 157.7L556.1 167.4L554.8 176.9L553.4 186.1L552.1 195.2L550.9 204.0L549.6 212.6L548.4 221.0L547.3 229.2L546.1 237.1L545.0 244.8L543.9 252.3L543.0 259.6L542.0 266.6L541.1 273.4L540.3 280.0L540.2 285.4L540.2 291.2L540.4 297.4L540.6 304.0L540.8 310.9L541.0 318.2L541.4 326.0L542.0 334.1L542.7 342.5L543.4 351.4L544.2 360.7L545.0 370.3L546.0 380.4L547.2 390.8L548.5 401.6L549.7 412.8L551.1 424.3L552.7 436.3L554.4 448.6L556.1 461.4L557.9 474.5L559.8 488.0M559.8 158.1L558.5 167.7L557.2 177.2L555.9 186.4L554.6 195.4L553.4 204.2L552.2 212.7L551.1 221.1L549.9 229.2L548.8 237.1L547.7 244.7L546.7 252.2L545.8 259.4L544.9 266.4L544.0 273.2L543.1 279.8L543.2 285.2L543.4 291.0L543.7 297.2L544.1 303.8L544.6 310.7L545.1 318.0L545.7 325.8L546.7 333.9L547.7 342.4L548.7 351.3L549.8 360.5L551.0 370.2L552.4 380.2L554.0 390.7L555.7 401.5L557.4 412.7L559.1 424.3L561.2 436.2L563.4 448.6L565.6 461.3L567.9 474.5L570.2 488.0M562.2 158.4L560.8 168.1L559.6 177.4L558.3 186.6L557.1 195.6L555.9 204.3L554.8 212.8L553.7 221.1L552.6 229.2L551.5 237.1L550.4 244.7L549.4 252.1L548.5 259.3L547.7 266.3L546.8 273.0L546.0 279.6L546.2 285.0L546.5 290.8L547.1 297.0L547.7 303.5L548.4 310.5L549.2 317.9L550.1 325.6L551.3 333.7L552.6 342.2L554.0 351.1L555.5 360.4L557.0 370.1L558.8 380.1L560.8 390.6L562.9 401.4L565.0 412.6L567.2 424.2L569.7 436.2L572.3 448.6L575.0 461.3L577.8 474.5L580.7 488.0M564.5 158.8L563.2 168.4L562.0 177.7L560.8 186.9L559.6 195.8L558.5 204.5L557.3 212.9L556.3 221.2L555.2 229.2L554.2 237.0L553.1 244.6L552.2 252.0L551.3 259.2L550.5 266.1L549.7 272.8L548.9 279.3L549.1 284.8L549.7 290.6L550.4 296.8L551.3 303.3L552.3 310.3L553.2 317.7L554.4 325.4L556.0 333.5L557.6 342.0L559.3 351.0L561.1 360.2L563.0 369.9L565.2 380.0L567.6 390.4L570.1 401.3L572.6 412.5L575.3 424.1L578.2 436.1L581.3 448.5L584.5 461.3L587.7 474.5L591.1 488.0M566.8 159.2L565.6 168.7L564.4 178.0L563.2 187.1L562.1 196.0L561.0 204.6L559.9 213.0L558.9 221.3L557.8 229.2L556.8 237.0L555.9 244.6L555.0 251.9L554.1 259.0L553.3 265.9L552.5 272.6L551.7 279.1L552.1 284.5L552.9 290.3L553.8 296.5L554.9 303.1L556.1 310.1L557.3 317.5L558.8 325.2L560.6 333.4L562.6 341.9L564.6 350.8L566.8 360.1L569.0 369.8L571.6 379.9L574.4 390.3L577.3 401.2L580.2 412.4L583.3 424.0L586.7 436.1L590.3 448.5L593.9 461.3L597.7 474.4L601.5 488.0M569.1 159.6L567.9 169.1L566.8 178.3L565.6 187.4L564.6 196.2L563.5 204.8L562.5 213.2L561.5 221.3L560.5 229.3L559.5 237.0L558.6 244.5L557.7 251.8L556.9 258.9L556.1 265.8L555.3 272.4L554.6 278.9L555.1 284.3L556.0 290.1L557.2 296.3L558.5 302.9L559.9 309.9L561.4 317.3L563.1 325.0L565.3 333.2L567.6 341.7L570.0 350.6L572.5 360.0L575.1 369.7L578.0 379.7L581.2 390.2L584.5 401.1L587.9 412.3L591.4 424.0L595.3 436.0L599.2 448.4L603.4 461.2L607.6 474.4L612.0 488.0M571.4 160.0L570.3 169.4L569.2 178.6L568.1 187.6L567.0 196.4L566.0 204.9L565.1 213.3L564.1 221.4L563.1 229.3L562.2 237.0L561.3 244.5L560.5 251.7L559.7 258.8L558.9 265.6L558.2 272.2L557.5 278.6L558.1 284.1L559.2 289.9L560.5 296.1L562.1 302.7L563.8 309.7L565.5 317.1L567.4 324.8L569.9 333.0L572.5 341.5L575.3 350.5L578.1 359.8L581.1 369.5L584.4 379.6L588.0 390.1L591.7 401.0L595.5 412.2L599.4 423.9L603.8 435.9L608.2 448.4L612.8 461.2L617.6 474.4L622.4 488.0M573.7 160.4L572.6 169.8L571.6 178.9L570.5 187.8L569.5 196.6L568.6 205.1L567.6 213.4L566.7 221.4L565.8 229.3L564.9 237.0L564.0 244.4L563.2 251.6L562.5 258.6L561.7 265.4L561.0 272.0L560.3 278.4L561.1 283.8L562.3 289.7L563.9 295.9L565.7 302.5L567.6 309.5L569.6 316.9L571.8 324.7L574.6 332.8L577.5 341.4L580.6 350.3L583.8 359.7L587.1 369.4L590.8 379.5L594.7 390.0L598.8 400.9L603.1 412.2L607.5 423.8L612.3 435.9L617.2 448.3L622.3 461.2L627.5 474.4L632.9 488.0M576.0 160.8L575.0 170.1L574.0 179.2L573.0 188.1L572.0 196.8L571.1 205.2L570.2 213.5L569.3 221.5L568.4 229.3L567.6 236.9L566.8 244.3L566.0 251.5L565.2 258.5L564.5 265.3L563.9 271.8L563.2 278.1L564.1 283.6L565.5 289.4L567.3 295.7L569.3 302.3L571.4 309.3L573.7 316.7L576.1 324.5L579.2 332.7L582.5 341.2L585.9 350.2L589.4 359.5L593.1 369.2L597.2 379.4L601.5 389.9L606.0 400.8L610.7 412.1L615.6 423.8L620.8 435.8L626.2 448.3L631.7 461.1L637.4 474.4L643.3 488.0M578.3 161.2L577.3 170.4L576.4 179.5L575.4 188.3L574.5 197.0L573.6 205.4L572.8 213.6L571.9 221.6L571.1 229.4L570.3 236.9L569.5 244.3L568.7 251.4L568.0 258.4L567.4 265.1L566.7 271.6L566.1 277.9L567.1 283.4L568.7 289.2L570.6 295.4L572.9 302.1L575.3 309.1L577.8 316.5L580.5 324.3L583.9 332.5L587.4 341.1L591.2 350.0L595.1 359.4L599.1 369.1L603.6 379.2L608.3 389.8L613.2 400.7L618.3 412.0L623.6 423.7L629.3 435.8L635.1 448.2L641.2 461.1L647.4 474.4L653.8 488.0M580.6 161.6L579.7 170.8L578.8 179.8L577.9 188.6L577.0 197.2L576.2 205.5L575.3 213.7L574.5 221.6L573.7 229.4L572.9 236.9L572.2 244.2L571.5 251.3L570.8 258.2L570.2 264.9L569.5 271.4L568.9 277.7L570.1 283.1L571.8 289.0L574.0 295.2L576.5 301.9L579.1 308.9L581.9 316.3L584.8 324.1L588.5 332.3L592.4 340.9L596.5 349.9L600.7 359.2L605.2 369.0L610.0 379.1L615.1 389.7L620.4 400.6L626.0 411.9L631.7 423.6L637.8 435.7L644.1 448.2L650.6 461.1L657.3 474.3L664.2 488.0M582.9 162.0L582.0 171.1L581.2 180.1L580.3 188.8L579.5 197.4L578.7 205.7L577.9 213.8L577.1 221.7L576.4 229.4L575.6 236.9L574.9 244.2L574.2 251.2L573.6 258.1L573.0 264.8L572.4 271.2L571.8 277.4L573.1 282.9L575.0 288.8L577.4 295.0L580.1 301.7L582.9 308.7L586.0 316.1L589.2 323.9L593.2 332.1L597.4 340.7L601.8 349.7L606.4 359.1L611.2 368.8L616.4 379.0L621.9 389.6L627.6 400.5L633.6 411.8L639.8 423.5L646.3 435.7L653.1 448.2L660.1 461.0L667.2 474.3L674.6 488.0M585.3 162.3L584.4 171.5L583.6 180.4L582.8 189.1L582.0 197.6L581.2 205.8L580.5 213.9L579.7 221.8L579.0 229.4L578.3 236.9L577.6 244.1L577.0 251.1L576.4 258.0L575.8 264.6L575.2 271.0L574.7 277.2L576.1 282.7L578.1 288.5L580.7 294.8L583.7 301.4L586.8 308.5L590.0 315.9L593.5 323.7L597.8 331.9L602.4 340.6L607.1 349.5L612.1 358.9L617.2 368.7L622.8 378.9L628.7 389.4L634.8 400.4L641.2 411.7L647.8 423.5L654.8 435.6L662.1 448.1L669.5 461.0L677.2 474.3L685.1 488.0M587.6 162.7L586.8 171.8L586.0 180.7L585.2 189.3L584.5 197.8L583.7 206.0L583.0 214.0L582.3 221.8L581.7 229.5L581.0 236.9L580.4 244.1L579.7 251.1L579.2 257.8L578.6 264.4L578.1 270.8L577.5 277.0L579.0 282.4L581.3 288.3L584.1 294.6L587.2 301.2L590.6 308.3L594.1 315.7L597.9 323.5L602.5 331.8L607.3 340.4L612.4 349.4L617.7 358.8L623.2 368.6L629.2 378.8L635.5 389.3L642.0 400.3L648.8 411.6L655.9 423.4L663.3 435.5L671.0 448.1L679.0 461.0L687.1 474.3L695.5 488.0M589.9 163.1L589.1 172.1L588.4 181.0L587.6 189.6L586.9 198.0L586.3 206.1L585.6 214.1L584.9 221.9L584.3 229.5L583.7 236.8L583.1 244.0L582.5 251.0L582.0 257.7L581.4 264.2L580.9 270.6L580.4 276.7L582.0 282.2L584.5 288.1L587.4 294.4L590.8 301.0L594.4 308.1L598.2 315.5L602.2 323.4L607.1 331.6L612.3 340.2L617.7 349.2L623.4 358.6L629.2 368.4L635.5 378.6L642.3 389.2L649.2 400.2L656.5 411.6L664.0 423.3L671.9 435.5L680.0 448.0L688.4 461.0L697.1 474.3L706.0 488.0M592.2 163.5L591.5 172.5L590.8 181.2L590.1 189.8L589.4 198.1L588.8 206.3L588.2 214.2L587.6 222.0L587.0 229.5L586.4 236.8L585.8 243.9L585.3 250.9L584.7 257.6L584.2 264.1L583.7 270.4L583.3 276.5L585.0 282.0L587.6 287.9L590.8 294.1L594.4 300.8L598.3 307.9L602.3 315.3L606.6 323.2L611.8 331.4L617.3 340.1L623.0 349.1L629.0 358.5L635.3 368.3L641.9 378.5L649.1 389.1L656.4 400.1L664.1 411.5L672.0 423.2L680.4 435.4L689.0 448.0L697.8 460.9L707.0 474.3L716.4 488.0M594.5 163.9L593.8 172.8L593.2 181.5L592.5 190.0L591.9 198.3L591.3 206.4L590.7 214.3L590.2 222.0L589.6 229.5L589.1 236.8L588.5 243.9L588.0 250.8L587.5 257.4L587.0 263.9L586.6 270.2L586.1 276.2L588.0 281.7L590.8 287.6L594.2 293.9L598.0 300.6L602.1 307.7L606.4 315.1L610.9 323.0L616.4 331.2L622.2 339.9L628.3 348.9L634.7 358.3L641.3 368.2L648.3 378.4L655.8 389.0L663.6 400.0L671.7 411.4L680.1 423.2L688.9 435.4L697.9 447.9L707.3 460.9L716.9 474.2L726.9 488.0M596.8 164.3L596.2 173.2L595.6 181.8L595.0 190.3L594.4 198.5L593.8 206.6L593.3 214.5L592.8 222.1L592.2 229.5L591.7 236.8L591.2 243.8L590.8 250.7L590.3 257.3L589.9 263.7L589.4 270.0L589.0 276.0L591.0 281.5L593.9 287.4L597.5 293.7L601.6 300.4L605.9 307.5L610.5 314.9L615.3 322.8L621.1 331.1L627.2 339.7L633.6 348.8L640.3 358.2L647.3 368.0L654.7 378.3L662.6 388.9L670.8 399.9L679.3 411.3L688.1 423.1L697.4 435.3L706.9 447.9L716.7 460.9L726.9 474.2L737.3 488.0" fill="none" stroke="#0a0a14" stroke-width="1" stroke-opacity="0.85"/><rect x="176.5" y="128.5" width="116" height="186" fill="none" stroke="#c9cdd8" stroke-width="1"/><text x="188.6" y="152.4" font-family="Liberation Sans" font-size="12.9" font-weight="normal" fill="#eef0f5" textLength="67" lengthAdjust="spacingAndGlyphs" xml:space="preserve">U, Magnitude</text><rect x="188" y="163.20" width="18" height="11.90" fill="#FF0000"/><rect x="188" y="174.90" width="18" height="11.90" fill="#FF5D00"/><rect x="188" y="186.60" width="18" height="11.90" fill="#FFB900"/><rect x="188" y="198.30" width="18" height="11.90" fill="#E8FF00"/><rect x="188" y="210.00" width="18" height="11.90" fill="#8BFF00"/><rect x="188" y="221.70" width="18" height="11.90" fill="#2EFF00"/><rect x="188" y="233.40" width="18" height="11.90" fill="#00FF2E"/><rect x="188" y="245.10" width="18" height="11.90" fill="#00FF8B"/><rect x="188" y="256.80" width="18" height="11.90" fill="#00FFE8"/><rect x="188" y="268.50" width="18" height="11.90" fill="#00B9FF"/><rect x="188" y="280.20" width="18" height="11.90" fill="#005DFF"/><rect x="188" y="291.90" width="18" height="11.90" fill="#0000FF"/><rect x="188" y="163.20" width="18" height="140.40" fill="none" stroke="#c8c8f0" stroke-width="0.8" stroke-opacity="0.8"/><rect x="188" y="162.70" width="24" height="1" fill="#c8ccd8" fill-opacity="0.85"/><text x="217.5" y="167.3" font-family="Liberation Sans" font-size="11.4" font-weight="normal" fill="#eef0f5" xml:space="preserve">+1.038e+00</text><rect x="188" y="174.40" width="24" height="1" fill="#c8ccd8" fill-opacity="0.85"/><text x="217.5" y="179.0" font-family="Liberation Sans" font-size="11.4" font-weight="normal" fill="#eef0f5" xml:space="preserve">+9.512e-01</text><rect x="188" y="186.10" width="24" height="1" fill="#c8ccd8" fill-opacity="0.85"/><text x="217.5" y="190.7" font-family="Liberation Sans" font-size="11.4" font-weight="normal" fill="#eef0f5" xml:space="preserve">+8.647e-01</text><rect x="188" y="197.80" width="24" height="1" fill="#c8ccd8" fill-opacity="0.85"/><text x="217.5" y="202.4" font-family="Liberation Sans" font-size="11.4" font-weight="normal" fill="#eef0f5" xml:space="preserve">+7.782e-01</text><rect x="188" y="209.50" width="24" height="1" fill="#c8ccd8" fill-opacity="0.85"/><text x="217.5" y="214.1" font-family="Liberation Sans" font-size="11.4" font-weight="normal" fill="#eef0f5" xml:space="preserve">+6.918e-01</text><rect x="188" y="221.20" width="24" height="1" fill="#c8ccd8" fill-opacity="0.85"/><text x="217.5" y="225.8" font-family="Liberation Sans" font-size="11.4" font-weight="normal" fill="#eef0f5" xml:space="preserve">+6.053e-01</text><rect x="188" y="232.90" width="24" height="1" fill="#c8ccd8" fill-opacity="0.85"/><text x="217.5" y="237.5" font-family="Liberation Sans" font-size="11.4" font-weight="normal" fill="#eef0f5" xml:space="preserve">+5.188e-01</text><rect x="188" y="244.60" width="24" height="1" fill="#c8ccd8" fill-opacity="0.85"/><text x="217.5" y="249.2" font-family="Liberation Sans" font-size="11.4" font-weight="normal" fill="#eef0f5" xml:space="preserve">+4.324e-01</text><rect x="188" y="256.30" width="24" height="1" fill="#c8ccd8" fill-opacity="0.85"/><text x="217.5" y="260.9" font-family="Liberation Sans" font-size="11.4" font-weight="normal" fill="#eef0f5" xml:space="preserve">+3.459e-01</text><rect x="188" y="268.00" width="24" height="1" fill="#c8ccd8" fill-opacity="0.85"/><text x="217.5" y="272.6" font-family="Liberation Sans" font-size="11.4" font-weight="normal" fill="#eef0f5" xml:space="preserve">+2.594e-01</text><rect x="188" y="279.70" width="24" height="1" fill="#c8ccd8" fill-opacity="0.85"/><text x="217.5" y="284.3" font-family="Liberation Sans" font-size="11.4" font-weight="normal" fill="#eef0f5" xml:space="preserve">+1.729e-01</text><rect x="188" y="291.40" width="24" height="1" fill="#c8ccd8" fill-opacity="0.85"/><text x="217.5" y="296.0" font-family="Liberation Sans" font-size="11.4" font-weight="normal" fill="#eef0f5" xml:space="preserve">+8.647e-02</text><rect x="188" y="303.10" width="24" height="1" fill="#c8ccd8" fill-opacity="0.85"/><text x="217.5" y="307.7" font-family="Liberation Sans" font-size="11.4" font-weight="normal" fill="#eef0f5" xml:space="preserve">+0.000e+00</text><text x="289.5" y="463" font-family="Liberation Sans" font-size="12" font-weight="normal" fill="#eef0f5" textLength="288" lengthAdjust="spacingAndGlyphs" xml:space="preserve">KOYNA DAM: NATURAL FREQUENCY EXTRACTION</text><text x="286" y="474.5" font-family="Liberation Sans" font-size="12" font-weight="normal" fill="#eef0f5" textLength="164.4" lengthAdjust="spacingAndGlyphs" xml:space="preserve">ODB: job1766040817.4679.odb</text><text x="463.6" y="474.5" font-family="Liberation Sans" font-size="12" font-weight="normal" fill="#eef0f5" textLength="116.6" lengthAdjust="spacingAndGlyphs" xml:space="preserve">Abaqus/Standard 2020</text><text x="593" y="474.5" font-family="Liberation Sans" font-size="12" font-weight="normal" fill="#eef0f5" textLength="56.4" lengthAdjust="spacingAndGlyphs" xml:space="preserve">Wed Feb 2</text><text x="286" y="495.3" font-family="Liberation Sans" font-size="12" font-weight="normal" fill="#eef0f5" textLength="276" lengthAdjust="spacingAndGlyphs" xml:space="preserve">Step: Step-2,  STEP 2 - FREQUENCY EXTRACTION</text><text x="286" y="508" font-family="Liberation Sans" font-size="12" font-weight="normal" fill="#eef0f5" textLength="28.6" lengthAdjust="spacingAndGlyphs" xml:space="preserve">Mode</text><text x="341.4" y="508" font-family="Liberation Sans" font-size="12" font-weight="normal" fill="#eef0f5" textLength="7" lengthAdjust="spacingAndGlyphs" xml:space="preserve">1:</text><text x="353.5" y="508" font-family="Liberation Sans" font-size="12" font-weight="normal" fill="#eef0f5" textLength="37.2" lengthAdjust="spacingAndGlyphs" xml:space="preserve">Value =</text><text x="400.2" y="508" font-family="Liberation Sans" font-size="12" font-weight="normal" fill="#eef0f5" textLength="36.4" lengthAdjust="spacingAndGlyphs" xml:space="preserve">355.76</text><text x="452" y="508" font-family="Liberation Sans" font-size="12" font-weight="normal" fill="#eef0f5" textLength="31.7" lengthAdjust="spacingAndGlyphs" xml:space="preserve">Freq =</text><text x="494.6" y="508" font-family="Liberation Sans" font-size="12" font-weight="normal" fill="#eef0f5" textLength="34.6" lengthAdjust="spacingAndGlyphs" xml:space="preserve">3.0019</text><text x="543.8" y="508" font-family="Liberation Sans" font-size="12" font-weight="normal" fill="#eef0f5" textLength="62.8" lengthAdjust="spacingAndGlyphs" xml:space="preserve">(cycles/time)</text><text x="286" y="521" font-family="Liberation Sans" font-size="12" font-weight="normal" fill="#eef0f5" textLength="132.4" lengthAdjust="spacingAndGlyphs" xml:space="preserve">Primary Var: U, Magnitude</text><text x="229.5" y="462.7" font-family="Liberation Sans" font-size="12" font-weight="bold" fill="#f4f4f4" textLength="7.5" lengthAdjust="spacingAndGlyphs" xml:space="preserve">Y</text><path d="M231.6 490V479.3H229L233.2 471.3L237.4 479.3H234.8V490Z" fill="#22c422"/><path d="M236 493.8H249.3V489.5L257.3 495.7L249.3 500V497.5H236Z" fill="#c01818"/><rect x="229" y="490" width="7" height="9" fill="#f4f4f4"/><path d="M230.3 491.5H234.7L231 497.3H234.9" stroke="#1428a0" stroke-width="1.5" fill="none"/><text x="265.4" y="498.6" font-family="Liberation Sans" font-size="12" font-weight="bold" fill="#f4f4f4" textLength="7" lengthAdjust="spacingAndGlyphs" xml:space="preserve">X</text><path d="M1024 170V144.1A26 26 0 0 1 1050 170Z" fill="#1d6a72" stroke="#c8d0e2" stroke-width="1.6"/><line x1="1024" y1="137" x2="1024" y2="193" stroke="#d0d4e6" stroke-width="1.6"/><line x1="1010" y1="192.6" x2="1044.5" y2="192.6" stroke="#d0d4e6" stroke-width="1.8"/><circle cx="1024" cy="137.2" r="3" fill="#dcdcf2"/><circle cx="1024" cy="192.6" r="3.6" fill="#f01010"/><text x="1021.5" y="130" font-family="Liberation Sans" font-size="8" font-weight="normal" fill="#b6c63a" textLength="5.5" lengthAdjust="spacingAndGlyphs" xml:space="preserve">Y</text><text x="1021.5" y="173.5" font-family="Liberation Sans" font-size="8" font-weight="normal" fill="#d8d040" textLength="5.5" lengthAdjust="spacingAndGlyphs" xml:space="preserve">Z</text><text x="1054.4" y="174.4" font-family="Liberation Sans" font-size="8" font-weight="normal" fill="#d8d040" textLength="5.5" lengthAdjust="spacingAndGlyphs" xml:space="preserve">X</text></svg><div style="left:109px;top:533px;width:989px;height:28px;background:linear-gradient(#fdfdfd 0%,#ececec 22%,#cacaca 65%,#c0c0c0 92%,#cfcfcf 100%)"></div><svg style="left:1015px;top:536px" width="83" height="22" viewBox="1015 536 83 22"><path d="M1024 539.5Q1028 537.5 1030 539Q1031 541 1027.5 542.5Q1030 543.5 1028.5 545" stroke="#2a9aa4" stroke-width="1.2" fill="none"/><path d="M1021 554L1024.5 545.5H1026Q1029.5 546 1028 550Q1026 554 1021 554Z" stroke="#2a9aa4" stroke-width="1.3" fill="none"/><path d="M1035 546.5Q1031 545.5 1030.5 548Q1030.5 549.5 1032.5 550Q1034.5 550.8 1033.5 552.5Q1032 554 1028.5 553" stroke="#2a9aa4" stroke-width="1.4" fill="none"/><text x="1040" y="552.3" font-family="Liberation Sans" font-style="italic" font-weight="bold" font-size="9" fill="#36a6b0" textLength="56" lengthAdjust="spacingAndGlyphs">SIMULIA</text></svg><div style="left:0;top:560px;width:1098px;height:46px;background:#c8c8c8;border-top:1px solid #ececec"></div><div style="left:3px;top:562px;width:27px;height:26px;background:#c4c4c4;border-top:1px solid #e8e8e8;border-left:1px solid #e8e8e8;border-right:1px solid #909090;border-bottom:1px solid #606060"></div><div style="left:4px;top:589px;width:25px;height:17px;background:#c4c4c4;border-top:1px solid #707070"></div><svg style="left:0;top:560px" width="30" height="46" viewBox="0 560 30 46"><rect x="9.5" y="567.5" width="12" height="13" fill="#e8ecdc" stroke="#707070" stroke-width="0.8"/><path d="M8 583L14 577L15.5 578.5L9.5 584.5Z" fill="#c8a030" stroke="#5a4a20" stroke-width="0.5"/><rect x="7" y="593" width="18" height="14" fill="#f4ec80" stroke="#404020" stroke-width="1"/><path d="M9 598L11.5 601L9 604M13 598L15.5 601L13 604M17 598L19.5 601L17 604" stroke="#222" stroke-width="1.3" fill="none"/></svg><div style="left:30px;top:562px;width:1043px;height:44px;background:#fff;border-top:1px solid #c4c4c4;border-left:1px solid #9a9a9a"></div><div class="t" style="left:32.5px;top:564.5px;font:9.5px 'Liberation Mono',monospace;letter-spacing:-1.3px;color:#111;">Please scroll up to check for error and warning messages.</div><div class="t" style="left:32.5px;top:573.5px;font:9.5px 'Liberation Mono',monospace;letter-spacing:-1.3px;color:#111;">The job &quot;job&quot; has been created.</div><div class="t" style="left:32.5px;top:583px;font:9.5px 'Liberation Mono',monospace;letter-spacing:-1.3px;color:#111;">The database &quot;/output/fre/job.odb&quot; is from a previous release of Abaqus.</div><div class="t" style="left:32.5px;top:592.3px;font:9.5px 'Liberation Mono',monospace;letter-spacing:-1.3px;color:#111;">A new, updated &quot;/tmp/job1766040817.4679.odb&quot; was created and opened.</div><div style="left:1073px;top:562px;width:12px;height:44px;background:#d4d4d4"></div><div style="left:1073px;top:562px;width:11px;height:11px;background:#d0d0d0;border-right:1px solid #505050;border-bottom:1px solid #505050;border-top:1px solid #f4f4f4;border-left:1px solid #f4f4f4"></div><div style="left:1075px;top:565px;width:0;height:0;border-left:3.5px solid transparent;border-right:3.5px solid transparent;border-bottom:4px solid #000"></div><div style="left:1073px;top:587px;width:11px;height:5px;background:#c8c8c8;border-top:1px solid #f4f4f4;border-bottom:1px solid #707070"></div><div style="left:1073px;top:592px;width:11px;height:12px;background:#d0d0d0;border-right:1px solid #505050;border-bottom:1px solid #505050;border-top:1px solid #f4f4f4;border-left:1px solid #f4f4f4"></div><div style="left:1075px;top:596px;width:0;height:0;border-left:3.5px solid transparent;border-right:3.5px solid transparent;border-top:4px solid #000"></div><div style="left:1076px;top:602px;width:7px;height:1px;background:#000"></div><div style="left:1087px;top:596px;width:10px;height:10px;background:radial-gradient(circle,#909090 0.7px,transparent 0.8px) 0 0/3px 3px"></div><div style="left:30px;top:604px;width:1043px;height:2px;background:#c0c0c0;border-top:1px solid #9a9a9a"></div><div style="left:437px;top:604px;width:224px;height:2px;background:#3c3c3c"></div></body></html>
